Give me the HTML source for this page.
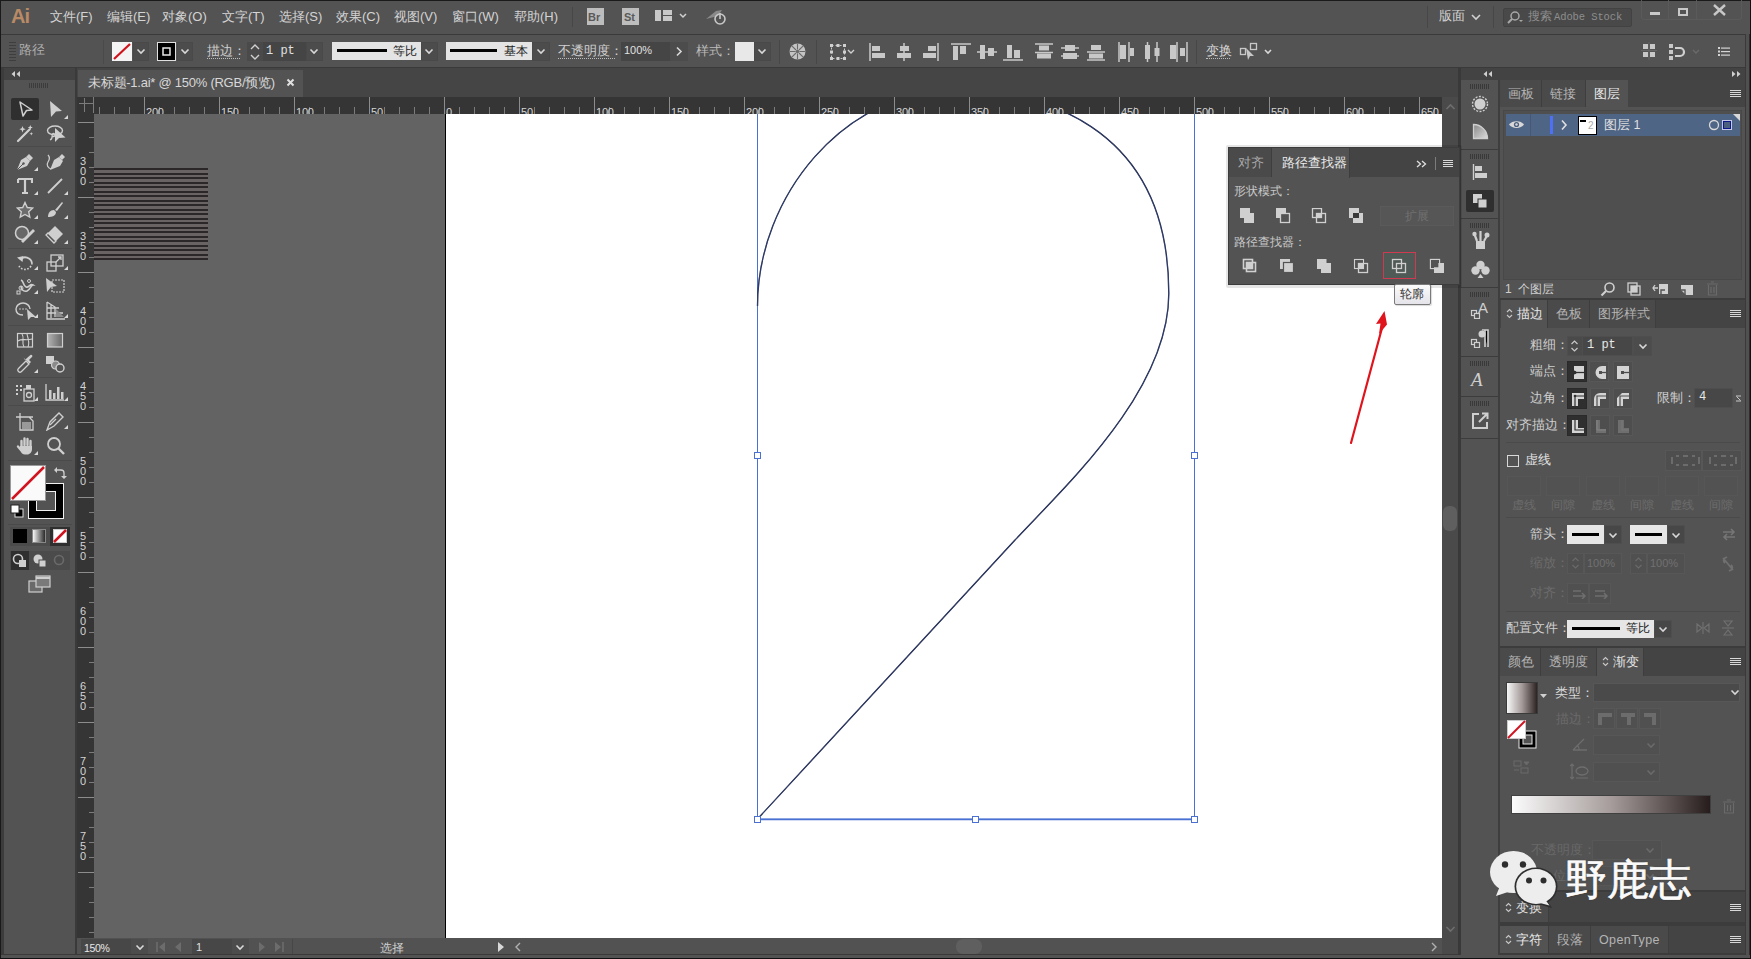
<!DOCTYPE html>
<html><head><meta charset="utf-8">
<style>
*{margin:0;padding:0;box-sizing:border-box}
html,body{width:1751px;height:959px;overflow:hidden;background:#535353;font-family:"Liberation Sans",sans-serif;color:#d8d8d8}
.a{position:absolute}
.t{position:absolute;white-space:nowrap;font-size:12px;line-height:14px}
</style></head><body>
<!-- window frame -->
<div class="a" style="left:0;top:0;width:1751px;height:959px;border:1px solid #1a1a1a"></div>
<!-- menu bar -->
<div class="a" style="left:1px;top:1px;width:1749px;height:33px;background:#535353"></div>
<div class="a" style="left:1px;top:34px;width:1749px;height:1px;background:#3a3a3a"></div>

<!-- MENUBAR CONTENT -->
<div class="t" style="left:11px;top:5px;font-size:20px;line-height:22px;font-weight:bold;color:#b98a66;letter-spacing:-1px">Ai</div>
<div class="t" style="left:50px;top:10px;font-size:13px;color:#d4d4d4">文件(F)</div>
<div class="t" style="left:107px;top:10px;font-size:13px;color:#d4d4d4">编辑(E)</div>
<div class="t" style="left:162px;top:10px;font-size:13px;color:#d4d4d4">对象(O)</div>
<div class="t" style="left:222px;top:10px;font-size:13px;color:#d4d4d4">文字(T)</div>
<div class="t" style="left:279px;top:10px;font-size:13px;color:#d4d4d4">选择(S)</div>
<div class="t" style="left:336px;top:10px;font-size:13px;color:#d4d4d4">效果(C)</div>
<div class="t" style="left:394px;top:10px;font-size:13px;color:#d4d4d4">视图(V)</div>
<div class="t" style="left:452px;top:10px;font-size:13px;color:#d4d4d4">窗口(W)</div>
<div class="t" style="left:514px;top:10px;font-size:13px;color:#d4d4d4">帮助(H)</div>
<div class="a" style="left:572px;top:7px;width:1px;height:20px;background:#474747"></div>
<div class="a" style="left:587px;top:8px;width:17px;height:17px;background:#bdbdbd"></div>
<div class="t" style="left:588px;top:10px;font-size:11px;font-weight:bold;color:#5a5a5a">Br</div>
<div class="a" style="left:622px;top:8px;width:17px;height:17px;background:#bdbdbd"></div>
<div class="t" style="left:624px;top:10px;font-size:11px;font-weight:bold;color:#5a5a5a">St</div>
<svg class="a" style="left:654px;top:9px" width="40" height="14"><rect x="1" y="1" width="6" height="11" fill="#c8c8c8"/><rect x="9" y="1" width="9" height="5" fill="#c8c8c8"/><rect x="9" y="7" width="9" height="5" fill="#c8c8c8"/><path d="M26 5l3 3 3-3" stroke="#d0d0d0" stroke-width="1.5" fill="none"/></svg>
<svg class="a" style="left:704px;top:7px" width="26" height="20"><path d="M2 12 L12 4 L18 3 L14 9 Z" fill="#8a8a8a"/><circle cx="16" cy="12" r="5" fill="none" stroke="#c8c8c8" stroke-width="1.6"/><path d="M16 6v6" stroke="#c8c8c8" stroke-width="1.6"/></svg>
<div class="a" style="left:1427px;top:6px;width:1px;height:22px;background:#474747"></div>
<div class="t" style="left:1439px;top:9px;font-size:13px;color:#d4d4d4">版面</div>
<svg class="a" style="left:1470px;top:13px" width="12" height="8"><path d="M2 2l4 4 4-4" stroke="#d0d0d0" stroke-width="1.6" fill="none"/></svg>
<div class="a" style="left:1493px;top:6px;width:1px;height:22px;background:#474747"></div>
<div class="a" style="left:1503px;top:8px;width:129px;height:19px;background:#494949;border:1px solid #424242;border-radius:2px"></div>
<svg class="a" style="left:1506px;top:10px" width="20" height="16"><circle cx="9" cy="6" r="4" fill="none" stroke="#a8a8a8" stroke-width="1.5"/><path d="M6 9 L2 13" stroke="#a8a8a8" stroke-width="2"/><path d="M13 10l2 2 2-2z" fill="#a8a8a8"/></svg>
<div class="t" style="left:1528px;top:9px;font-size:12px;color:#8e8e8e">搜索</div><div class="t" style="left:1554px;top:10px;font-size:10.5px;color:#8e8e8e;font-family:'Liberation Mono',monospace;letter-spacing:-0.1px">Adobe Stock</div>
<div class="a" style="left:1641px;top:0px;width:101px;height:20px;border:1px solid #5a5a5a;border-top:none;border-radius:0 0 3px 3px"></div>
<div class="a" style="left:1668px;top:0px;width:1px;height:19px;background:#5a5a5a"></div>
<div class="a" style="left:1696px;top:0px;width:1px;height:19px;background:#5a5a5a"></div>
<div class="a" style="left:1650px;top:12px;width:10px;height:3px;background:#c8c8c8"></div>
<div class="a" style="left:1678px;top:8px;width:10px;height:8px;border:2px solid #c8c8c8"></div>
<svg class="a" style="left:1712px;top:4px" width="16" height="12"><path d="M2 1L13 11M13 1L2 11" stroke="#c8c8c8" stroke-width="2.4"/></svg>

<!-- control bar -->
<div class="a" style="left:1px;top:35px;width:1749px;height:33px;background:#535353"></div>
<div class="a" style="left:1px;top:67px;width:1749px;height:1px;background:#3a3a3a"></div>


<!-- CONTROL CONTENT -->
<div class="a" style="left:9px;top:42px;width:7px;height:19px;background:repeating-linear-gradient(#3e3e3e 0 1px,transparent 1px 3px)"></div>
<div class="t" style="left:19px;top:43px;font-size:13px;color:#b0b0b0">路径</div>
<div class="a" style="left:103px;top:40px;width:1px;height:24px;background:#4a4a4a"></div>
<svg class="a" style="left:112px;top:42px" width="20" height="19"><rect width="20" height="19" fill="#f4f4f4"/><path d="M2 17L18 2" stroke="#d0121b" stroke-width="2.2"/></svg>
<div class="a" style="left:133px;top:42px;width:16px;height:19px;background:#4c4c4c;border:1px solid #494949"></div><svg class="a" style="left:136px;top:48px" width="10" height="7"><path d="M1.5 1.5l3.5 3.5 3.5-3.5" stroke="#d8d8d8" stroke-width="1.6" fill="none"/></svg>
<svg class="a" style="left:157px;top:42px" width="19" height="19"><rect x="0.5" y="0.5" width="18" height="18" fill="#000" stroke="#e0e0e0"/><rect x="6" y="6" width="7" height="7" fill="none" stroke="#e8e8e8" stroke-width="1.5"/></svg>
<div class="a" style="left:177px;top:42px;width:16px;height:19px;background:#4c4c4c;border:1px solid #494949"></div><svg class="a" style="left:180px;top:48px" width="10" height="7"><path d="M1.5 1.5l3.5 3.5 3.5-3.5" stroke="#d8d8d8" stroke-width="1.6" fill="none"/></svg>
<div class="t" style="left:207px;top:44px;font-size:13px;color:#d0d0d0">描边：</div>
<div class="a" style="left:207px;top:58px;width:33px;height:1px;border-top:1px dotted #bdbdbd"></div>
<div class="a" style="left:247px;top:42px;width:16px;height:19px;background:#4a4a4a"></div>
<svg class="a" style="left:249px;top:43px" width="12" height="18"><path d="M2 6l4-4 4 4M2 12l4 4 4-4" stroke="#d0d0d0" stroke-width="1.4" fill="none"/></svg>
<div class="a" style="left:263px;top:42px;width:43px;height:19px;background:#454545"></div>
<div class="t" style="left:266px;top:44px;font-size:12px;color:#e0e0e0;font-family:'Liberation Mono',monospace">1 pt</div>
<div class="a" style="left:306px;top:42px;width:17px;height:19px;background:#4c4c4c;border:1px solid #494949"></div><svg class="a" style="left:309px;top:48px" width="10" height="7"><path d="M1.5 1.5l3.5 3.5 3.5-3.5" stroke="#d8d8d8" stroke-width="1.6" fill="none"/></svg>
<div class="a" style="left:332px;top:42px;width:89px;height:18px;background:#e4e4e4"></div>
<div class="a" style="left:337px;top:49px;width:50px;height:3px;background:#050505"></div>
<div class="t" style="left:393px;top:44px;font-size:12px;color:#222">等比</div>
<div class="a" style="left:421px;top:42px;width:17px;height:19px;background:#4c4c4c;border:1px solid #494949"></div><svg class="a" style="left:424px;top:48px" width="10" height="7"><path d="M1.5 1.5l3.5 3.5 3.5-3.5" stroke="#d8d8d8" stroke-width="1.6" fill="none"/></svg>
<div class="a" style="left:446px;top:42px;width:86px;height:18px;background:#e4e4e4"></div>
<div class="a" style="left:450px;top:49px;width:47px;height:3px;background:#050505"></div>
<div class="t" style="left:504px;top:44px;font-size:12px;color:#222">基本</div>
<div class="a" style="left:532px;top:42px;width:18px;height:19px;background:#4c4c4c;border:1px solid #494949"></div><svg class="a" style="left:536px;top:48px" width="10" height="7"><path d="M1.5 1.5l3.5 3.5 3.5-3.5" stroke="#d8d8d8" stroke-width="1.6" fill="none"/></svg>
<div class="t" style="left:558px;top:44px;font-size:13px;color:#d0d0d0">不透明度：</div>
<div class="a" style="left:558px;top:58px;width:57px;height:1px;border-top:1px dotted #bdbdbd"></div>
<div class="a" style="left:621px;top:42px;width:49px;height:19px;background:#454545"></div>
<div class="t" style="left:624px;top:43px;font-size:11px;color:#e0e0e0">100%</div>
<div class="a" style="left:670px;top:42px;width:18px;height:19px;background:#4c4c4c"></div>
<svg class="a" style="left:675px;top:46px" width="8" height="11"><path d="M2 1.5l4 4-4 4" stroke="#d8d8d8" stroke-width="1.6" fill="none"/></svg>
<div class="t" style="left:696px;top:44px;font-size:13px;color:#bdbdbd">样式：</div>
<div class="a" style="left:735px;top:42px;width:19px;height:19px;background:#e8e8e8"></div>
<div class="a" style="left:754px;top:42px;width:17px;height:19px;background:#4c4c4c;border:1px solid #494949"></div><svg class="a" style="left:757px;top:48px" width="10" height="7"><path d="M1.5 1.5l3.5 3.5 3.5-3.5" stroke="#d8d8d8" stroke-width="1.6" fill="none"/></svg>
<div class="a" style="left:779px;top:40px;width:1px;height:24px;background:#474747"></div>
<svg class="a" style="left:788px;top:42px" width="19" height="19"><circle cx="9.5" cy="9.5" r="8" fill="#c4c4c4"/><g stroke="#6a6a6a" stroke-width="1.1"><path d="M9.5 1.5v6M9.5 11.5v6M1.5 9.5h6M11.5 9.5h6M3.8 3.8l4.2 4.2M11 11l4.2 4.2M15.2 3.8L11 8M8 11l-4.2 4.2"/></g><circle cx="9.5" cy="9.5" r="1.8" fill="#6a6a6a"/></svg>
<div class="a" style="left:816px;top:40px;width:1px;height:24px;background:#474747"></div>
<svg class="a" style="left:829px;top:43px" width="28" height="18"><rect x="2.5" y="2.5" width="13" height="13" fill="none" stroke="#c8c8c8" stroke-dasharray="2 2"/><g fill="#d0d0d0"><rect x="1" y="1" width="3" height="3"/><rect x="7.5" y="1" width="3" height="3"/><rect x="14" y="1" width="3" height="3"/><rect x="1" y="14" width="3" height="3"/><rect x="7.5" y="14" width="3" height="3"/><rect x="14" y="14" width="3" height="3"/><rect x="1" y="7.5" width="3" height="3"/><rect x="14" y="7.5" width="3" height="3"/></g><path d="M19 7l3 3 3-3" stroke="#d0d0d0" stroke-width="1.4" fill="none"/></svg>

<svg class="a" style="left:868px;top:42px" width="20" height="20"><path d="M2 1v18" stroke="#c8c8c8" stroke-width="1.5"/><rect x="4" y="4" width="8" height="5" fill="#c8c8c8"/><rect x="4" y="11" width="13" height="5" fill="#c8c8c8"/></svg>
<svg class="a" style="left:894px;top:42px" width="20" height="20"><path d="M10 1v18" stroke="#c8c8c8" stroke-width="1.5"/><rect x="6" y="4" width="9" height="5" fill="#c8c8c8"/><rect x="3" y="11" width="14" height="5" fill="#c8c8c8"/></svg>
<svg class="a" style="left:920px;top:42px" width="20" height="20"><path d="M18 1v18" stroke="#c8c8c8" stroke-width="1.5"/><rect x="8" y="4" width="8" height="5" fill="#c8c8c8"/><rect x="3" y="11" width="13" height="5" fill="#c8c8c8"/></svg>
<svg class="a" style="left:950px;top:42px" width="22" height="20"><path d="M1 2h20" stroke="#c8c8c8" stroke-width="1.5"/><rect x="3" y="4" width="5" height="14" fill="#c8c8c8"/><rect x="10" y="4" width="6" height="8" fill="#c8c8c8"/></svg>
<svg class="a" style="left:976px;top:42px" width="22" height="20"><path d="M1 10h20" stroke="#c8c8c8" stroke-width="1.5"/><rect x="4" y="3" width="5" height="14" fill="#c8c8c8"/><rect x="12" y="6" width="6" height="8" fill="#c8c8c8"/></svg>
<svg class="a" style="left:1002px;top:42px" width="22" height="20"><path d="M1 18h20" stroke="#c8c8c8" stroke-width="1.5"/><rect x="5" y="3" width="5" height="13" fill="#c8c8c8"/><rect x="12" y="8" width="6" height="8" fill="#c8c8c8"/></svg>
<svg class="a" style="left:1033px;top:42px" width="22" height="20"><path d="M2 2h18M2 10.5h18" stroke="#c8c8c8" stroke-width="1.5"/><rect x="6" y="3.5" width="10" height="5" fill="#c8c8c8"/><rect x="4" y="11.5" width="14" height="5" fill="#c8c8c8"/></svg>
<svg class="a" style="left:1059px;top:42px" width="22" height="20"><path d="M2 6h18M2 14h18" stroke="#c8c8c8" stroke-width="1.5"/><rect x="6" y="3" width="10" height="6" fill="#c8c8c8"/><rect x="4" y="11" width="14" height="6" fill="#c8c8c8"/></svg>
<svg class="a" style="left:1085px;top:42px" width="22" height="20"><path d="M2 10h18M2 18h18" stroke="#c8c8c8" stroke-width="1.5"/><rect x="6" y="3" width="10" height="5" fill="#c8c8c8"/><rect x="4" y="11.5" width="14" height="5" fill="#c8c8c8"/></svg>
<svg class="a" style="left:1117px;top:41px" width="20" height="22"><path d="M2 1v20M12 1v20" stroke="#c8c8c8" stroke-width="1.5"/><rect x="3" y="4" width="6" height="14" fill="#c8c8c8"/><rect x="13" y="7" width="4" height="8" fill="#c8c8c8"/></svg>
<svg class="a" style="left:1143px;top:41px" width="20" height="22"><path d="M4.5 1v20M14 1v20" stroke="#c8c8c8" stroke-width="1.5"/><rect x="2" y="4" width="5" height="14" fill="#c8c8c8"/><rect x="11.5" y="7" width="5" height="8" fill="#c8c8c8"/></svg>
<svg class="a" style="left:1169px;top:41px" width="20" height="22"><path d="M8 1v20M18 1v20" stroke="#c8c8c8" stroke-width="1.5"/><rect x="1" y="4" width="6" height="14" fill="#c8c8c8"/><rect x="11" y="7" width="5" height="8" fill="#c8c8c8"/></svg>
<div class="a" style="left:1196px;top:40px;width:1px;height:24px;background:#474747"></div>
<div class="t" style="left:1206px;top:44px;font-size:13px;color:#d8d8d8">变换</div>
<div class="a" style="left:1206px;top:58px;width:24px;height:1px;border-top:1px dotted #bdbdbd"></div>
<svg class="a" style="left:1239px;top:42px" width="34" height="20"><rect x="1.5" y="6.5" width="5" height="6" fill="none" stroke="#c8c8c8" stroke-width="1.3"/><rect x="11.5" y="1.5" width="6" height="6" fill="none" stroke="#c8c8c8" stroke-width="1.3"/><path d="M7 6l8 8-4 0-2 4z" fill="#c8c8c8"/><path d="M26 8l3 3 3-3" stroke="#d8d8d8" stroke-width="1.6" fill="none"/></svg>
<svg class="a" style="left:1641px;top:42px" width="16" height="18"><g fill="#c8c8c8"><rect x="2" y="2" width="5" height="5"/><rect x="9" y="2" width="5" height="5"/><rect x="2" y="10" width="5" height="5"/><rect x="9" y="10" width="5" height="5"/></g><path d="M8 0v18M0 8.5h16" stroke="#6a6a6a" stroke-width="0.8"/></svg>
<svg class="a" style="left:1667px;top:42px" width="38" height="20"><g fill="#c8c8c8"><rect x="2" y="2" width="4" height="4"/><rect x="2" y="8" width="4" height="4"/><rect x="2" y="14" width="4" height="4"/></g><path d="M8 6h5a4 4 0 0 1 0 8h-5" stroke="#d0d0d0" stroke-width="2.2" fill="none"/><path d="M26 8l3 3 3-3" stroke="#6a6a6a" stroke-width="1.4" fill="none"/></svg>
<svg class="a" style="left:1717px;top:46px" width="14" height="11"><g fill="#d4d4d4"><rect x="1" y="1" width="2" height="2"/><rect x="1" y="4.5" width="2" height="2"/><rect x="1" y="8" width="2" height="2"/><rect x="4" y="1.5" width="9" height="1.2"/><rect x="4" y="5" width="9" height="1.2"/><rect x="4" y="8.5" width="9" height="1.2"/></g></svg>

<!-- left toolbar -->
<div class="a" style="left:4px;top:68px;width:72px;height:12px;background:#434343"></div>
<div class="a" style="left:75px;top:68px;width:2px;height:886px;background:#3a3a3a"></div>


<!-- TOOLBAR -->
<div class="a" style="left:1px;top:68px;width:3px;height:887px;background:#3c3c3c"></div>
<svg class="a" style="left:10px;top:70px" width="12" height="8"><path d="M5 1L1.5 4 5 7zM10 1L6.5 4 10 7z" fill="#d0d0d0"/></svg>
<div class="a" style="left:29px;top:83px;width:20px;height:5px;background:repeating-linear-gradient(90deg,#3c3c3c 0 1px,transparent 1px 2px)"></div>
<div class="a" style="left:11px;top:98px;width:28px;height:22px;background:#2f2f2f;border-radius:2px"></div>
<svg class="a" style="left:18px;top:100px" width="16" height="18"><path d="M2 2L14 10 8.5 10.5 5 16z" fill="none" stroke="#cfcfcf" stroke-width="1.5" stroke-linejoin="round"/></svg>
<svg class="a" style="left:48px;top:100px" width="16" height="18"><path d="M2 1L14 11 8 11.5 3 17z" fill="#cfcfcf"/></svg><svg class="a" style="left:64px;top:115px" width="4" height="4"><path d="M4 0V4H0z" fill="#d8d8d8"/></svg>
<svg class="a" style="left:10px;top:120px" width="60" height="26">
<path d="M8 21L19.5 9.5" stroke="#d0d0d0" stroke-width="2.2" stroke-linecap="round"/>
<path d="M12.5 6l.9 2.3 2.3.9-2.3.9-.9 2.3-.9-2.3-2.3-.9 2.3-.9z" fill="#d0d0d0"/>
<path d="M20.3 5l.7 1.8 1.8.7-1.8.7-.7 1.8-.7-1.8-1.8-.7 1.8-.7z" fill="#d0d0d0"/>
<path d="M21.3 12l.5 1.3 1.3.5-1.3.5-.5 1.3-.5-1.3-1.3-.5 1.3-.5z" fill="#d0d0d0"/>
<ellipse cx="45" cy="10.5" rx="7.5" ry="4.5" fill="none" stroke="#d0d0d0" stroke-width="1.4"/>
<path d="M45 8L55.5 17.5 49 18 45 22z" fill="#d0d0d0"/>
<path d="M42 14.5a1.6 1.6 0 1 1 .2 1.5c0 2-1 3.5-2.2 4" stroke="#d0d0d0" stroke-width="1.3" fill="none"/>
</svg>
<div class="a" style="left:8px;top:146px;width:64px;height:1px;background:#4a4a4a"></div>
<svg class="a" style="left:15px;top:153px" width="20" height="19"><path d="M2 17L6 7 11 4 15 8 12 13z" fill="#cfcfcf"/><path d="M11 4l3-3 4 4-3 3z" fill="#cfcfcf"/><path d="M2 17L8 11" stroke="#535353" stroke-width="1"/><circle cx="8.5" cy="10.5" r="1.2" fill="#535353"/></svg><svg class="a" style="left:34px;top:167px" width="4" height="4"><path d="M4 0V4H0z" fill="#d8d8d8"/></svg>
<svg class="a" style="left:45px;top:153px" width="21" height="19"><path d="M5 17L9 7 14 4 18 8 15 13z" fill="#cfcfcf"/><path d="M14 4l3-3 3 3-3 3z" fill="#cfcfcf"/><path d="M3 2c2 2 2 4 0 7s0 6 3 7" stroke="#cfcfcf" stroke-width="1.3" fill="none"/></svg>
<svg class="a" style="left:17px;top:178px" width="16" height="16"><path d="M1 1h14v4M1 1v4M8 1v14M5 15h6" stroke="#cfcfcf" stroke-width="2.2" fill="none"/></svg><svg class="a" style="left:34px;top:191px" width="4" height="4"><path d="M4 0V4H0z" fill="#d8d8d8"/></svg>
<svg class="a" style="left:46px;top:177px" width="18" height="18"><path d="M2 16L16 2" stroke="#cfcfcf" stroke-width="1.8"/></svg><svg class="a" style="left:64px;top:191px" width="4" height="4"><path d="M4 0V4H0z" fill="#d8d8d8"/></svg>
<svg class="a" style="left:16px;top:201px" width="18" height="18"><path d="M9 1.5l2.3 5 5.4.6-4 3.7 1.1 5.4L9 13.5l-4.8 2.7 1.1-5.4-4-3.7 5.4-.6z" fill="#6c6c6c" stroke="#cfcfcf" stroke-width="1.4"/></svg><svg class="a" style="left:34px;top:215px" width="4" height="4"><path d="M4 0V4H0z" fill="#d8d8d8"/></svg>
<svg class="a" style="left:45px;top:200px" width="19" height="19"><path d="M10 10L17 2 18 3 12 11z" fill="#cfcfcf"/><path d="M3 17c0-4 2-7 6-7l2 2c0 4-4 5-8 5z" fill="#cfcfcf"/></svg><svg class="a" style="left:64px;top:215px" width="4" height="4"><path d="M4 0V4H0z" fill="#d8d8d8"/></svg>
<svg class="a" style="left:14px;top:224px" width="23" height="20"><circle cx="8" cy="9" r="6.5" fill="#676767" stroke="#cfcfcf" stroke-width="1.5"/><path d="M7 17L19 5 21 7 9 19z" fill="#cfcfcf"/></svg><svg class="a" style="left:34px;top:240px" width="4" height="4"><path d="M4 0V4H0z" fill="#d8d8d8"/></svg>
<svg class="a" style="left:45px;top:224px" width="20" height="20"><path d="M10 2L18 10 11 17 3 9z" fill="#cfcfcf"/><path d="M3 9l8 8-2 2-8-8z" fill="none" stroke="#cfcfcf" stroke-width="1.3"/></svg><svg class="a" style="left:64px;top:240px" width="4" height="4"><path d="M4 0V4H0z" fill="#d8d8d8"/></svg>
<div class="a" style="left:8px;top:248px;width:64px;height:1px;background:#4a4a4a"></div>
<svg class="a" style="left:16px;top:254px" width="18" height="18"><path d="M4 5.5A7 7 0 0 1 16 9" stroke="#cfcfcf" stroke-width="1.8" fill="none"/><path d="M16 9A7 7 0 0 1 3 12" stroke="#cfcfcf" stroke-width="1.6" fill="none" stroke-dasharray="1.6 1.6"/><path d="M1 3.5l6.5-1.5-1 6z" fill="#cfcfcf"/></svg><svg class="a" style="left:34px;top:266px" width="4" height="4"><path d="M4 0V4H0z" fill="#d8d8d8"/></svg>
<svg class="a" style="left:46px;top:254px" width="19" height="18"><rect x="1" y="8" width="9" height="9" fill="none" stroke="#cfcfcf" stroke-width="1.3"/><rect x="5" y="1" width="12" height="11" fill="none" stroke="#cfcfcf" stroke-width="1.3"/><path d="M10 8l5-5M12 3h3v3" stroke="#cfcfcf" stroke-width="1.3" fill="none"/></svg><svg class="a" style="left:64px;top:266px" width="4" height="4"><path d="M4 0V4H0z" fill="#d8d8d8"/></svg>
<svg class="a" style="left:15px;top:277px" width="21" height="18"><path d="M6 3c3 1 2 6 5 7s4-4 7-2c-2 0-2 4-6 6-4 1-6-2-6-5" fill="none" stroke="#cfcfcf" stroke-width="1.6"/><circle cx="6" cy="11" r="2" fill="none" stroke="#cfcfcf"/><rect x="2" y="14" width="3" height="3" fill="none" stroke="#cfcfcf"/><circle cx="14" cy="4" r="1.5" fill="none" stroke="#cfcfcf"/></svg><svg class="a" style="left:34px;top:290px" width="4" height="4"><path d="M4 0V4H0z" fill="#d8d8d8"/></svg>
<svg class="a" style="left:45px;top:277px" width="21" height="18"><path d="M1 1L12 9 6 10 2 15z" fill="#cfcfcf"/><rect x="7" y="3" width="12" height="12" fill="none" stroke="#cfcfcf" stroke-width="1.2" stroke-dasharray="2 1"/></svg>
<svg class="a" style="left:15px;top:301px" width="22" height="19"><path d="M8 14c-5 0-7-3-7-6s3-6 7-6 7 3 7 6" fill="none" stroke="#cfcfcf" stroke-width="1.4"/><circle cx="5" cy="8" r="0.8" fill="#cfcfcf"/><circle cx="8" cy="8" r="0.8" fill="#cfcfcf"/><circle cx="11" cy="8" r="0.8" fill="#cfcfcf"/><path d="M12 8L21 16 16 16 13 19z" fill="#cfcfcf"/></svg><svg class="a" style="left:34px;top:314px" width="4" height="4"><path d="M4 0V4H0z" fill="#d8d8d8"/></svg>
<svg class="a" style="left:46px;top:301px" width="20" height="19"><path d="M1 1v17h18M1 1l8 5v10M1 7h12M1 12h16M5 3v14" stroke="#cfcfcf" stroke-width="1.3" fill="none"/><path d="M10 8l8 8h-8z" fill="#8a8a8a"/></svg><svg class="a" style="left:64px;top:314px" width="4" height="4"><path d="M4 0V4H0z" fill="#d8d8d8"/></svg>
<div class="a" style="left:8px;top:325px;width:64px;height:1px;background:#4a4a4a"></div>
<svg class="a" style="left:16px;top:332px" width="18" height="17"><rect x="1.5" y="1.5" width="15" height="13.5" fill="none" stroke="#d0d0d0" stroke-width="1.2"/><path d="M2 9c4-3 8 0 14-2M6 2c3 4-1 8 2 13M11 2c1 5 3 8 1 13" stroke="#d0d0d0" stroke-width="1.1" fill="none"/></svg>
<svg class="a" style="left:46px;top:332px" width="18" height="17"><defs><linearGradient id="tg1"><stop offset="0" stop-color="#b4b4b4"/><stop offset="1" stop-color="#666"/></linearGradient></defs><rect x="1.5" y="1.5" width="15" height="13.5" fill="url(#tg1)" stroke="#d0d0d0" stroke-width="1.2"/></svg>
<svg class="a" style="left:15px;top:354px" width="20" height="19"><path d="M3.5 17.5c-1-1-1-2 0-3L11 7l3 3-7.5 7.5c-1 1-2 1-3 0z" fill="none" stroke="#d0d0d0" stroke-width="1.3"/><path d="M10 6l2-2 3.5-3c1-.8 2.5.7 1.7 1.7L14 6l2 2-1.5 1.5-6-6z" fill="#d0d0d0"/></svg><svg class="a" style="left:34px;top:369px" width="4" height="4"><path d="M4 0V4H0z" fill="#d8d8d8"/></svg>
<svg class="a" style="left:45px;top:355px" width="21" height="18"><rect x="1" y="1" width="8" height="8" fill="#d0d0d0"/><circle cx="10.5" cy="10" r="4" fill="#8a8a8a" stroke="#d0d0d0" stroke-width="1.2"/><circle cx="15" cy="13" r="4" fill="#535353" stroke="#d0d0d0" stroke-width="1.4"/></svg>
<div class="a" style="left:8px;top:377px;width:64px;height:1px;background:#4a4a4a"></div>
<svg class="a" style="left:15px;top:383px" width="22" height="19"><g fill="#cfcfcf"><rect x="1" y="2" width="2" height="2"/><rect x="5" y="2" width="2" height="2"/><rect x="1" y="6" width="2" height="2"/><rect x="5" y="6" width="2" height="2"/><rect x="1" y="10" width="2" height="2"/></g><rect x="9" y="6" width="10" height="12" fill="none" stroke="#cfcfcf" stroke-width="1.3"/><rect x="11" y="2" width="5" height="4" fill="#cfcfcf"/><circle cx="14" cy="12" r="2.5" fill="none" stroke="#cfcfcf" stroke-width="1.3"/></svg><svg class="a" style="left:34px;top:397px" width="4" height="4"><path d="M4 0V4H0z" fill="#d8d8d8"/></svg>
<svg class="a" style="left:45px;top:383px" width="20" height="18"><path d="M1 1v16h18" stroke="#cfcfcf" stroke-width="1.3" fill="none"/><g fill="#cfcfcf"><rect x="4" y="7" width="2.5" height="9"/><rect x="8" y="10" width="2.5" height="6"/><rect x="12" y="4" width="2.5" height="12"/><rect x="16" y="9" width="2.5" height="7"/></g></svg><svg class="a" style="left:64px;top:397px" width="4" height="4"><path d="M4 0V4H0z" fill="#d8d8d8"/></svg>
<div class="a" style="left:8px;top:405px;width:64px;height:1px;background:#4a4a4a"></div>
<svg class="a" style="left:15px;top:412px" width="20" height="19"><path d="M5 1v4M1 5h17M5 5v13h13V9l-4-4" stroke="#cfcfcf" stroke-width="1.3" fill="none"/><path d="M7 10h9v7H7z" fill="#999"/></svg>
<svg class="a" style="left:45px;top:412px" width="20" height="19"><path d="M2 18l3-8 9-9 4 4-9 9z" fill="none" stroke="#cfcfcf" stroke-width="1.4"/><path d="M5 13l6-6" stroke="#cfcfcf" stroke-width="1.2"/></svg><svg class="a" style="left:64px;top:425px" width="4" height="4"><path d="M4 0V4H0z" fill="#d8d8d8"/></svg>
<svg class="a" style="left:15px;top:436px" width="20" height="20"><g stroke="#cfcfcf" stroke-linecap="round" stroke-width="2.4"><path d="M6.5 10V5M9.5 9V2.5M12.5 9V3M15.5 10V5"/><path d="M3 10.5l2.5 3"/></g><path d="M5 10h12v3c0 3-2 5.5-5 5.5H10c-2.5 0-3.5-1.5-5-4z" fill="#cfcfcf"/></svg><svg class="a" style="left:34px;top:451px" width="4" height="4"><path d="M4 0V4H0z" fill="#d8d8d8"/></svg>
<svg class="a" style="left:46px;top:436px" width="19" height="19"><circle cx="8" cy="8" r="6" fill="none" stroke="#cfcfcf" stroke-width="1.8"/><path d="M12.5 12.5L18 18" stroke="#cfcfcf" stroke-width="2.4"/></svg>
<div class="a" style="left:8px;top:460px;width:64px;height:1px;background:#4a4a4a"></div>
<!-- fill/stroke -->
<svg class="a" style="left:28px;top:483px" width="36" height="36"><rect x="0.5" y="0.5" width="35" height="35" fill="#000" stroke="#f0f0f0" stroke-width="1"/><rect x="8.5" y="8.5" width="19" height="19" fill="#535353" stroke="#f0f0f0" stroke-width="1"/></svg>
<svg class="a" style="left:10px;top:465px" width="36" height="36"><rect x="0.5" y="0.5" width="35" height="35" fill="#fafafa" stroke="#9a9a9a"/><path d="M2 34L34 2" stroke="#d01420" stroke-width="2.5"/></svg>
<svg class="a" style="left:53px;top:466px" width="14" height="14"><path d="M2 4h6a3 3 0 0 1 3 3v5" stroke="#d0d0d0" stroke-width="1.3" fill="none"/><path d="M1 4l3-3v6zM11 13l-3-3h6z" fill="#d0d0d0"/></svg>
<svg class="a" style="left:10px;top:504px" width="14" height="14"><rect x="5" y="5" width="8" height="8" fill="#000" stroke="#ddd"/><rect x="1" y="1" width="8" height="8" fill="#fff" stroke="#222"/></svg>
<div class="a" style="left:8px;top:524px;width:64px;height:1px;background:#4a4a4a"></div>
<div class="a" style="left:10px;top:527px;width:60px;height:19px;background:#4b4b4b"></div>
<div class="a" style="left:13px;top:529px;width:14px;height:14px;background:#000"></div>
<svg class="a" style="left:32px;top:529px" width="14" height="14"><defs><linearGradient id="tg2"><stop offset="0" stop-color="#fff"/><stop offset="1" stop-color="#222"/></linearGradient></defs><rect x="0.5" y="0.5" width="13" height="13" fill="url(#tg2)" stroke="#888"/></svg>
<div class="a" style="left:50px;top:527px;width:20px;height:19px;background:#2f2f2f"></div>
<svg class="a" style="left:53px;top:529px" width="14" height="14"><rect x="0.5" y="0.5" width="13" height="13" fill="#fff" stroke="#ccc"/><path d="M1 13L13 1" stroke="#d01420" stroke-width="2.5"/></svg>
<div class="a" style="left:10px;top:551px;width:60px;height:19px;background:#4b4b4b"></div>
<div class="a" style="left:11px;top:551px;width:18px;height:19px;background:#2f2f2f"></div>
<svg class="a" style="left:12px;top:553px" width="16" height="15"><circle cx="6" cy="6" r="4.5" fill="none" stroke="#cfcfcf" stroke-width="1.6"/><rect x="7" y="7" width="7" height="7" fill="#cfcfcf"/></svg>
<svg class="a" style="left:32px;top:553px" width="16" height="15"><circle cx="6" cy="6" r="4.5" fill="#cfcfcf"/><rect x="7" y="7" width="7" height="7" fill="#cfcfcf" stroke="#4b4b4b"/></svg>
<svg class="a" style="left:52px;top:553px" width="16" height="15"><circle cx="7" cy="7" r="4.5" fill="none" stroke="#6a6a6a" stroke-width="1.6"/></svg>
<svg class="a" style="left:28px;top:575px" width="24" height="19"><rect x="1" y="6" width="13" height="11" fill="#6a6a6a" stroke="#cfcfcf" stroke-width="1.2"/><rect x="8" y="1" width="14" height="11" fill="#7a7a7a" stroke="#cfcfcf" stroke-width="1.2"/><path d="M8 3h14" stroke="#cfcfcf" stroke-width="2"/></svg>

<!-- doc tab area -->
<div class="a" style="left:77px;top:68px;width:1381px;height:29px;background:#454545"></div>
<div class="a" style="left:78px;top:70px;width:225px;height:27px;background:#535353"></div>
<div class="t" style="left:88px;top:76px;font-size:13px;color:#d8d8d8;letter-spacing:-0.25px">未标题-1.ai* @ 150% (RGB/预览)</div>
<svg class="a" style="left:286px;top:78px" width="9" height="9"><path d="M1.5 1.5l6 6M7.5 1.5l-6 6" stroke="#e0e0e0" stroke-width="2"/></svg>
<!-- rulers -->
<div class="a" style="left:77px;top:97px;width:1365px;height:17px;background:#353535;overflow:hidden">
</div>
<div class="a" style="left:94px;top:97px;width:1348px;height:17px;overflow:hidden">
<div class="a" style="left:-94px;top:-97px;width:1442px;height:113px"><div class="a" style="left:159px;top:107px;width:1px;height:7px;background:#7c7c7c"></div><div class="a" style="left:234px;top:107px;width:1px;height:7px;background:#7c7c7c"></div><div class="a" style="left:309px;top:107px;width:1px;height:7px;background:#7c7c7c"></div><div class="a" style="left:384px;top:107px;width:1px;height:7px;background:#7c7c7c"></div><div class="a" style="left:459px;top:107px;width:1px;height:7px;background:#7c7c7c"></div><div class="a" style="left:534px;top:107px;width:1px;height:7px;background:#7c7c7c"></div><div class="a" style="left:609px;top:107px;width:1px;height:7px;background:#7c7c7c"></div><div class="a" style="left:684px;top:107px;width:1px;height:7px;background:#7c7c7c"></div><div class="a" style="left:759px;top:107px;width:1px;height:7px;background:#7c7c7c"></div><div class="a" style="left:834px;top:107px;width:1px;height:7px;background:#7c7c7c"></div><div class="a" style="left:909px;top:107px;width:1px;height:7px;background:#7c7c7c"></div><div class="a" style="left:984px;top:107px;width:1px;height:7px;background:#7c7c7c"></div><div class="a" style="left:1059px;top:107px;width:1px;height:7px;background:#7c7c7c"></div><div class="a" style="left:1134px;top:107px;width:1px;height:7px;background:#7c7c7c"></div><div class="a" style="left:1209px;top:107px;width:1px;height:7px;background:#7c7c7c"></div><div class="a" style="left:1284px;top:107px;width:1px;height:7px;background:#7c7c7c"></div><div class="a" style="left:1359px;top:107px;width:1px;height:7px;background:#7c7c7c"></div><div class="a" style="left:1434px;top:107px;width:1px;height:7px;background:#7c7c7c"></div>
<div class="a" style="left:99px;top:107px;width:1px;height:7px;background:#7c7c7c"></div><div class="a" style="left:114px;top:107px;width:1px;height:7px;background:#7c7c7c"></div><div class="a" style="left:129px;top:107px;width:1px;height:7px;background:#7c7c7c"></div><div class="a" style="left:144px;top:97px;width:1px;height:17px;background:#8c8c8c"></div><div class="t" style="left:146px;top:107px;font-size:11px;line-height:10px;color:#d4d4d4;letter-spacing:-0.2px">200</div><div class="a" style="left:174px;top:107px;width:1px;height:7px;background:#7c7c7c"></div><div class="a" style="left:189px;top:107px;width:1px;height:7px;background:#7c7c7c"></div><div class="a" style="left:204px;top:107px;width:1px;height:7px;background:#7c7c7c"></div><div class="a" style="left:219px;top:97px;width:1px;height:17px;background:#8c8c8c"></div><div class="t" style="left:221px;top:107px;font-size:11px;line-height:10px;color:#d4d4d4;letter-spacing:-0.2px">150</div><div class="a" style="left:249px;top:107px;width:1px;height:7px;background:#7c7c7c"></div><div class="a" style="left:264px;top:107px;width:1px;height:7px;background:#7c7c7c"></div><div class="a" style="left:279px;top:107px;width:1px;height:7px;background:#7c7c7c"></div><div class="a" style="left:294px;top:97px;width:1px;height:17px;background:#8c8c8c"></div><div class="t" style="left:296px;top:107px;font-size:11px;line-height:10px;color:#d4d4d4;letter-spacing:-0.2px">100</div><div class="a" style="left:324px;top:107px;width:1px;height:7px;background:#7c7c7c"></div><div class="a" style="left:339px;top:107px;width:1px;height:7px;background:#7c7c7c"></div><div class="a" style="left:354px;top:107px;width:1px;height:7px;background:#7c7c7c"></div><div class="a" style="left:369px;top:97px;width:1px;height:17px;background:#8c8c8c"></div><div class="t" style="left:371px;top:107px;font-size:11px;line-height:10px;color:#d4d4d4;letter-spacing:-0.2px">50</div><div class="a" style="left:399px;top:107px;width:1px;height:7px;background:#7c7c7c"></div><div class="a" style="left:414px;top:107px;width:1px;height:7px;background:#7c7c7c"></div><div class="a" style="left:429px;top:107px;width:1px;height:7px;background:#7c7c7c"></div><div class="a" style="left:444px;top:97px;width:1px;height:17px;background:#8c8c8c"></div><div class="t" style="left:446px;top:107px;font-size:11px;line-height:10px;color:#d4d4d4;letter-spacing:-0.2px">0</div><div class="a" style="left:474px;top:107px;width:1px;height:7px;background:#7c7c7c"></div><div class="a" style="left:489px;top:107px;width:1px;height:7px;background:#7c7c7c"></div><div class="a" style="left:504px;top:107px;width:1px;height:7px;background:#7c7c7c"></div><div class="a" style="left:519px;top:97px;width:1px;height:17px;background:#8c8c8c"></div><div class="t" style="left:521px;top:107px;font-size:11px;line-height:10px;color:#d4d4d4;letter-spacing:-0.2px">50</div><div class="a" style="left:549px;top:107px;width:1px;height:7px;background:#7c7c7c"></div><div class="a" style="left:564px;top:107px;width:1px;height:7px;background:#7c7c7c"></div><div class="a" style="left:579px;top:107px;width:1px;height:7px;background:#7c7c7c"></div><div class="a" style="left:594px;top:97px;width:1px;height:17px;background:#8c8c8c"></div><div class="t" style="left:596px;top:107px;font-size:11px;line-height:10px;color:#d4d4d4;letter-spacing:-0.2px">100</div><div class="a" style="left:624px;top:107px;width:1px;height:7px;background:#7c7c7c"></div><div class="a" style="left:639px;top:107px;width:1px;height:7px;background:#7c7c7c"></div><div class="a" style="left:654px;top:107px;width:1px;height:7px;background:#7c7c7c"></div><div class="a" style="left:669px;top:97px;width:1px;height:17px;background:#8c8c8c"></div><div class="t" style="left:671px;top:107px;font-size:11px;line-height:10px;color:#d4d4d4;letter-spacing:-0.2px">150</div><div class="a" style="left:699px;top:107px;width:1px;height:7px;background:#7c7c7c"></div><div class="a" style="left:714px;top:107px;width:1px;height:7px;background:#7c7c7c"></div><div class="a" style="left:729px;top:107px;width:1px;height:7px;background:#7c7c7c"></div><div class="a" style="left:744px;top:97px;width:1px;height:17px;background:#8c8c8c"></div><div class="t" style="left:746px;top:107px;font-size:11px;line-height:10px;color:#d4d4d4;letter-spacing:-0.2px">200</div><div class="a" style="left:774px;top:107px;width:1px;height:7px;background:#7c7c7c"></div><div class="a" style="left:789px;top:107px;width:1px;height:7px;background:#7c7c7c"></div><div class="a" style="left:804px;top:107px;width:1px;height:7px;background:#7c7c7c"></div><div class="a" style="left:819px;top:97px;width:1px;height:17px;background:#8c8c8c"></div><div class="t" style="left:821px;top:107px;font-size:11px;line-height:10px;color:#d4d4d4;letter-spacing:-0.2px">250</div><div class="a" style="left:849px;top:107px;width:1px;height:7px;background:#7c7c7c"></div><div class="a" style="left:864px;top:107px;width:1px;height:7px;background:#7c7c7c"></div><div class="a" style="left:879px;top:107px;width:1px;height:7px;background:#7c7c7c"></div><div class="a" style="left:894px;top:97px;width:1px;height:17px;background:#8c8c8c"></div><div class="t" style="left:896px;top:107px;font-size:11px;line-height:10px;color:#d4d4d4;letter-spacing:-0.2px">300</div><div class="a" style="left:924px;top:107px;width:1px;height:7px;background:#7c7c7c"></div><div class="a" style="left:939px;top:107px;width:1px;height:7px;background:#7c7c7c"></div><div class="a" style="left:954px;top:107px;width:1px;height:7px;background:#7c7c7c"></div><div class="a" style="left:969px;top:97px;width:1px;height:17px;background:#8c8c8c"></div><div class="t" style="left:971px;top:107px;font-size:11px;line-height:10px;color:#d4d4d4;letter-spacing:-0.2px">350</div><div class="a" style="left:999px;top:107px;width:1px;height:7px;background:#7c7c7c"></div><div class="a" style="left:1014px;top:107px;width:1px;height:7px;background:#7c7c7c"></div><div class="a" style="left:1029px;top:107px;width:1px;height:7px;background:#7c7c7c"></div><div class="a" style="left:1044px;top:97px;width:1px;height:17px;background:#8c8c8c"></div><div class="t" style="left:1046px;top:107px;font-size:11px;line-height:10px;color:#d4d4d4;letter-spacing:-0.2px">400</div><div class="a" style="left:1074px;top:107px;width:1px;height:7px;background:#7c7c7c"></div><div class="a" style="left:1089px;top:107px;width:1px;height:7px;background:#7c7c7c"></div><div class="a" style="left:1104px;top:107px;width:1px;height:7px;background:#7c7c7c"></div><div class="a" style="left:1119px;top:97px;width:1px;height:17px;background:#8c8c8c"></div><div class="t" style="left:1121px;top:107px;font-size:11px;line-height:10px;color:#d4d4d4;letter-spacing:-0.2px">450</div><div class="a" style="left:1149px;top:107px;width:1px;height:7px;background:#7c7c7c"></div><div class="a" style="left:1164px;top:107px;width:1px;height:7px;background:#7c7c7c"></div><div class="a" style="left:1179px;top:107px;width:1px;height:7px;background:#7c7c7c"></div><div class="a" style="left:1194px;top:97px;width:1px;height:17px;background:#8c8c8c"></div><div class="t" style="left:1196px;top:107px;font-size:11px;line-height:10px;color:#d4d4d4;letter-spacing:-0.2px">500</div><div class="a" style="left:1224px;top:107px;width:1px;height:7px;background:#7c7c7c"></div><div class="a" style="left:1239px;top:107px;width:1px;height:7px;background:#7c7c7c"></div><div class="a" style="left:1254px;top:107px;width:1px;height:7px;background:#7c7c7c"></div><div class="a" style="left:1269px;top:97px;width:1px;height:17px;background:#8c8c8c"></div><div class="t" style="left:1271px;top:107px;font-size:11px;line-height:10px;color:#d4d4d4;letter-spacing:-0.2px">550</div><div class="a" style="left:1299px;top:107px;width:1px;height:7px;background:#7c7c7c"></div><div class="a" style="left:1314px;top:107px;width:1px;height:7px;background:#7c7c7c"></div><div class="a" style="left:1329px;top:107px;width:1px;height:7px;background:#7c7c7c"></div><div class="a" style="left:1344px;top:97px;width:1px;height:17px;background:#8c8c8c"></div><div class="t" style="left:1346px;top:107px;font-size:11px;line-height:10px;color:#d4d4d4;letter-spacing:-0.2px">600</div><div class="a" style="left:1374px;top:107px;width:1px;height:7px;background:#7c7c7c"></div><div class="a" style="left:1389px;top:107px;width:1px;height:7px;background:#7c7c7c"></div><div class="a" style="left:1404px;top:107px;width:1px;height:7px;background:#7c7c7c"></div><div class="a" style="left:1419px;top:97px;width:1px;height:17px;background:#8c8c8c"></div><div class="t" style="left:1421px;top:107px;font-size:11px;line-height:10px;color:#d4d4d4;letter-spacing:-0.2px">650</div>
</div></div>
<div class="a" style="left:77px;top:113px;width:17px;height:825px;background:#353535"></div>
<div class="a" style="left:78px;top:113px;width:16px;height:825px;overflow:hidden">
<div class="a" style="left:-78px;top:-113px;width:94px;height:938px">
<div class="a" style="left:78px;top:122px;width:16px;height:1px;background:#8c8c8c"></div><div class="a" style="left:89px;top:137px;width:5px;height:1px;background:#7c7c7c"></div><div class="a" style="left:89px;top:152px;width:5px;height:1px;background:#7c7c7c"></div><div class="a" style="left:89px;top:167px;width:5px;height:1px;background:#7c7c7c"></div><div class="a" style="left:89px;top:182px;width:5px;height:1px;background:#7c7c7c"></div><div class="a" style="left:78px;top:197px;width:16px;height:1px;background:#8c8c8c"></div><div class="t" style="left:80px;top:156px;font-size:11px;line-height:10px;color:#d4d4d4">3</div><div class="t" style="left:80px;top:166px;font-size:11px;line-height:10px;color:#d4d4d4">0</div><div class="t" style="left:80px;top:176px;font-size:11px;line-height:10px;color:#d4d4d4">0</div><div class="a" style="left:89px;top:212px;width:5px;height:1px;background:#7c7c7c"></div><div class="a" style="left:89px;top:227px;width:5px;height:1px;background:#7c7c7c"></div><div class="a" style="left:89px;top:242px;width:5px;height:1px;background:#7c7c7c"></div><div class="a" style="left:89px;top:257px;width:5px;height:1px;background:#7c7c7c"></div><div class="a" style="left:78px;top:272px;width:16px;height:1px;background:#8c8c8c"></div><div class="t" style="left:80px;top:231px;font-size:11px;line-height:10px;color:#d4d4d4">3</div><div class="t" style="left:80px;top:241px;font-size:11px;line-height:10px;color:#d4d4d4">5</div><div class="t" style="left:80px;top:251px;font-size:11px;line-height:10px;color:#d4d4d4">0</div><div class="a" style="left:89px;top:287px;width:5px;height:1px;background:#7c7c7c"></div><div class="a" style="left:89px;top:302px;width:5px;height:1px;background:#7c7c7c"></div><div class="a" style="left:89px;top:317px;width:5px;height:1px;background:#7c7c7c"></div><div class="a" style="left:89px;top:332px;width:5px;height:1px;background:#7c7c7c"></div><div class="a" style="left:78px;top:347px;width:16px;height:1px;background:#8c8c8c"></div><div class="t" style="left:80px;top:306px;font-size:11px;line-height:10px;color:#d4d4d4">4</div><div class="t" style="left:80px;top:316px;font-size:11px;line-height:10px;color:#d4d4d4">0</div><div class="t" style="left:80px;top:326px;font-size:11px;line-height:10px;color:#d4d4d4">0</div><div class="a" style="left:89px;top:362px;width:5px;height:1px;background:#7c7c7c"></div><div class="a" style="left:89px;top:377px;width:5px;height:1px;background:#7c7c7c"></div><div class="a" style="left:89px;top:392px;width:5px;height:1px;background:#7c7c7c"></div><div class="a" style="left:89px;top:407px;width:5px;height:1px;background:#7c7c7c"></div><div class="a" style="left:78px;top:422px;width:16px;height:1px;background:#8c8c8c"></div><div class="t" style="left:80px;top:381px;font-size:11px;line-height:10px;color:#d4d4d4">4</div><div class="t" style="left:80px;top:391px;font-size:11px;line-height:10px;color:#d4d4d4">5</div><div class="t" style="left:80px;top:401px;font-size:11px;line-height:10px;color:#d4d4d4">0</div><div class="a" style="left:89px;top:437px;width:5px;height:1px;background:#7c7c7c"></div><div class="a" style="left:89px;top:452px;width:5px;height:1px;background:#7c7c7c"></div><div class="a" style="left:89px;top:467px;width:5px;height:1px;background:#7c7c7c"></div><div class="a" style="left:89px;top:482px;width:5px;height:1px;background:#7c7c7c"></div><div class="a" style="left:78px;top:497px;width:16px;height:1px;background:#8c8c8c"></div><div class="t" style="left:80px;top:456px;font-size:11px;line-height:10px;color:#d4d4d4">5</div><div class="t" style="left:80px;top:466px;font-size:11px;line-height:10px;color:#d4d4d4">0</div><div class="t" style="left:80px;top:476px;font-size:11px;line-height:10px;color:#d4d4d4">0</div><div class="a" style="left:89px;top:512px;width:5px;height:1px;background:#7c7c7c"></div><div class="a" style="left:89px;top:527px;width:5px;height:1px;background:#7c7c7c"></div><div class="a" style="left:89px;top:542px;width:5px;height:1px;background:#7c7c7c"></div><div class="a" style="left:89px;top:557px;width:5px;height:1px;background:#7c7c7c"></div><div class="a" style="left:78px;top:572px;width:16px;height:1px;background:#8c8c8c"></div><div class="t" style="left:80px;top:531px;font-size:11px;line-height:10px;color:#d4d4d4">5</div><div class="t" style="left:80px;top:541px;font-size:11px;line-height:10px;color:#d4d4d4">5</div><div class="t" style="left:80px;top:551px;font-size:11px;line-height:10px;color:#d4d4d4">0</div><div class="a" style="left:89px;top:587px;width:5px;height:1px;background:#7c7c7c"></div><div class="a" style="left:89px;top:602px;width:5px;height:1px;background:#7c7c7c"></div><div class="a" style="left:89px;top:617px;width:5px;height:1px;background:#7c7c7c"></div><div class="a" style="left:89px;top:632px;width:5px;height:1px;background:#7c7c7c"></div><div class="a" style="left:78px;top:647px;width:16px;height:1px;background:#8c8c8c"></div><div class="t" style="left:80px;top:606px;font-size:11px;line-height:10px;color:#d4d4d4">6</div><div class="t" style="left:80px;top:616px;font-size:11px;line-height:10px;color:#d4d4d4">0</div><div class="t" style="left:80px;top:626px;font-size:11px;line-height:10px;color:#d4d4d4">0</div><div class="a" style="left:89px;top:662px;width:5px;height:1px;background:#7c7c7c"></div><div class="a" style="left:89px;top:677px;width:5px;height:1px;background:#7c7c7c"></div><div class="a" style="left:89px;top:692px;width:5px;height:1px;background:#7c7c7c"></div><div class="a" style="left:89px;top:707px;width:5px;height:1px;background:#7c7c7c"></div><div class="a" style="left:78px;top:722px;width:16px;height:1px;background:#8c8c8c"></div><div class="t" style="left:80px;top:681px;font-size:11px;line-height:10px;color:#d4d4d4">6</div><div class="t" style="left:80px;top:691px;font-size:11px;line-height:10px;color:#d4d4d4">5</div><div class="t" style="left:80px;top:701px;font-size:11px;line-height:10px;color:#d4d4d4">0</div><div class="a" style="left:89px;top:737px;width:5px;height:1px;background:#7c7c7c"></div><div class="a" style="left:89px;top:752px;width:5px;height:1px;background:#7c7c7c"></div><div class="a" style="left:89px;top:767px;width:5px;height:1px;background:#7c7c7c"></div><div class="a" style="left:89px;top:782px;width:5px;height:1px;background:#7c7c7c"></div><div class="a" style="left:78px;top:797px;width:16px;height:1px;background:#8c8c8c"></div><div class="t" style="left:80px;top:756px;font-size:11px;line-height:10px;color:#d4d4d4">7</div><div class="t" style="left:80px;top:766px;font-size:11px;line-height:10px;color:#d4d4d4">0</div><div class="t" style="left:80px;top:776px;font-size:11px;line-height:10px;color:#d4d4d4">0</div><div class="a" style="left:89px;top:812px;width:5px;height:1px;background:#7c7c7c"></div><div class="a" style="left:89px;top:827px;width:5px;height:1px;background:#7c7c7c"></div><div class="a" style="left:89px;top:842px;width:5px;height:1px;background:#7c7c7c"></div><div class="a" style="left:89px;top:857px;width:5px;height:1px;background:#7c7c7c"></div><div class="a" style="left:78px;top:872px;width:16px;height:1px;background:#8c8c8c"></div><div class="t" style="left:80px;top:831px;font-size:11px;line-height:10px;color:#d4d4d4">7</div><div class="t" style="left:80px;top:841px;font-size:11px;line-height:10px;color:#d4d4d4">5</div><div class="t" style="left:80px;top:851px;font-size:11px;line-height:10px;color:#d4d4d4">0</div><div class="a" style="left:89px;top:887px;width:5px;height:1px;background:#7c7c7c"></div><div class="a" style="left:89px;top:902px;width:5px;height:1px;background:#7c7c7c"></div><div class="a" style="left:89px;top:917px;width:5px;height:1px;background:#7c7c7c"></div><div class="a" style="left:89px;top:932px;width:5px;height:1px;background:#7c7c7c"></div>
</div></div>
<!-- ruler corner -->
<div class="a" style="left:77px;top:97px;width:17px;height:17px;background:#353535"></div>
<div class="a" style="left:84px;top:98px;width:1px;height:14px;background:#7c7c7c"></div>
<div class="a" style="left:79px;top:103px;width:14px;height:1px;background:#7c7c7c"></div>
<div class="a" style="left:93px;top:97px;width:1px;height:16px;background:#7c7c7c"></div>
<!-- canvas -->
<div class="a" style="left:94px;top:114px;width:1348px;height:824px;background:#636363"></div>
<div class="a" style="left:94px;top:168px;width:114px;height:92px;background:repeating-linear-gradient(180deg,#2b2728 0 2px,#6a6363 2px 4.51px)"></div>
<div class="a" style="left:445px;top:114px;width:1px;height:824px;background:#000"></div>
<div class="a" style="left:446px;top:114px;width:996px;height:824px;background:#ffffff"></div>
<!-- artwork -->
<svg class="a" style="left:446px;top:114px" width="996" height="824" viewBox="446 114 996 824">
<rect x="757.5" y="91.5" width="437" height="727.5" fill="none" stroke="#4a70d4" stroke-width="1"/>
<path d="M757.5 306 C757.5 196.6 844.2 89.9 954.9 89.9 C1032.7 89.9 1168.8 119.9 1168.8 293.4 C1168.8 392.1 1063.1 488.0 1014.8 540.3 L757.5 819" fill="none" stroke="#161a30" stroke-width="1.35"/>
<path d="M757.5 306 C757.5 196.6 844.2 89.9 954.9 89.9 C1032.7 89.9 1168.8 119.9 1168.8 293.4 C1168.8 392.1 1063.1 488.0 1014.8 540.3 L757.5 819" fill="none" stroke="#5070d8" stroke-width="0.7" opacity="0.6"/>
<path d="M757.5 819.5 H1194.5" stroke="#4a70d4" stroke-width="1.6"/>
<g fill="#fff" stroke="#4a70d4" stroke-width="1">
<rect x="754.5" y="452.5" width="6" height="6"/>
<rect x="1191.5" y="452.5" width="6" height="6"/>
<rect x="754.5" y="816.5" width="6" height="6"/>
<rect x="972.5" y="816.5" width="6" height="6"/>
<rect x="1191.5" y="816.5" width="6" height="6"/>
</g>
</svg>
<!-- v scrollbar -->
<div class="a" style="left:1442px;top:97px;width:16px;height:841px;background:#4a4a4a"></div>
<svg class="a" style="left:1445px;top:103px" width="11" height="8"><path d="M1.5 6l4-4 4 4" stroke="#6e6e6e" stroke-width="1.6" fill="none"/></svg>
<div class="a" style="left:1443px;top:506px;width:14px;height:25px;background:#5f5f5f;border-radius:6px"></div>
<svg class="a" style="left:1445px;top:925px" width="11" height="8"><path d="M1.5 2l4 4 4-4" stroke="#6e6e6e" stroke-width="1.6" fill="none"/></svg>
<!-- status bar -->
<div class="a" style="left:77px;top:938px;width:1381px;height:17px;background:#525252"></div>
<div class="a" style="left:81px;top:939px;width:50px;height:16px;background:#474747"></div>
<div class="t" style="left:84px;top:941px;font-size:10.5px;color:#e8e8e8;letter-spacing:-0.3px">150%</div>
<div class="a" style="left:131px;top:939px;width:17px;height:16px;background:#4c4c4c"></div>
<svg class="a" style="left:135px;top:944px" width="10" height="7"><path d="M1.5 1.5l3.5 3.5 3.5-3.5" stroke="#d8d8d8" stroke-width="1.6" fill="none"/></svg>
<svg class="a" style="left:155px;top:941px" width="36" height="12"><path d="M2 1v10" stroke="#6c6c6c" stroke-width="1.6"/><path d="M10 1L4 6l6 5z M26 1l-6 5 6 5z" fill="#6c6c6c"/></svg>
<div class="a" style="left:192px;top:939px;width:40px;height:16px;background:#474747"></div>
<div class="t" style="left:196px;top:940px;font-size:11px;color:#e0e0e0">1</div>
<div class="a" style="left:232px;top:939px;width:17px;height:16px;background:#4c4c4c"></div>
<svg class="a" style="left:235px;top:944px" width="10" height="7"><path d="M1.5 1.5l3.5 3.5 3.5-3.5" stroke="#d8d8d8" stroke-width="1.6" fill="none"/></svg>
<svg class="a" style="left:255px;top:941px" width="36" height="12"><path d="M4 1l6 5-6 5z M20 1l6 5-6 5z" fill="#6c6c6c"/><path d="M28 1v10" stroke="#6c6c6c" stroke-width="1.6"/></svg>
<div class="a" style="left:292px;top:939px;width:1px;height:16px;background:#474747"></div>
<div class="t" style="left:380px;top:941px;font-size:12px;color:#d0d0d0">选择</div>
<svg class="a" style="left:496px;top:941px" width="10" height="12"><path d="M2 1l6 5-6 5z" fill="#d8d8d8"/></svg>
<svg class="a" style="left:514px;top:941px" width="8" height="12"><path d="M6 2L2 6l4 4" stroke="#b0b0b0" stroke-width="1.4" fill="none"/></svg>
<div class="a" style="left:956px;top:939px;width:26px;height:15px;background:#5f5f5f;border-radius:7px"></div>
<svg class="a" style="left:1430px;top:941px" width="8" height="12"><path d="M2 2l4 4-4 4" stroke="#b0b0b0" stroke-width="1.4" fill="none"/></svg>
<div class="a" style="left:1442px;top:938px;width:16px;height:17px;background:#4a4a4a"></div>
<div class="a" style="left:1px;top:954px;width:1749px;height:1px;background:#3a3a3a"></div>

<!-- DOCK -->
<div class="a" style="left:1458px;top:68px;width:3px;height:887px;background:#393939"></div>
<div class="a" style="left:1461px;top:68px;width:285px;height:12px;background:#434343"></div>
<svg class="a" style="left:1482px;top:70px" width="12" height="8"><path d="M5 1L1.5 4 5 7zM10 1L6.5 4 10 7z" fill="#d0d0d0"/></svg>
<svg class="a" style="left:1731px;top:70px" width="12" height="8"><path d="M1 1l3.5 3L1 7zM6 1l3.5 3L6 7z" fill="#d0d0d0"/></svg>
<div class="a" style="left:1461px;top:80px;width:38px;height:875px;background:#535353"></div>
<div class="a" style="left:1498px;top:80px;width:2px;height:875px;background:#3e3e3e"></div>
<div class="a" style="left:1461px;top:149px;width:37px;height:1px;background:#3c3c3c"></div><div class="a" style="left:1470px;top:84px;width:20px;height:5px;background:repeating-linear-gradient(90deg,#393939 0 1px,transparent 1px 2px)"></div><div class="a" style="left:1461px;top:218px;width:37px;height:1px;background:#3c3c3c"></div><div class="a" style="left:1470px;top:154px;width:20px;height:5px;background:repeating-linear-gradient(90deg,#393939 0 1px,transparent 1px 2px)"></div><div class="a" style="left:1461px;top:287px;width:37px;height:1px;background:#3c3c3c"></div><div class="a" style="left:1470px;top:223px;width:20px;height:5px;background:repeating-linear-gradient(90deg,#393939 0 1px,transparent 1px 2px)"></div><div class="a" style="left:1461px;top:356px;width:37px;height:1px;background:#3c3c3c"></div><div class="a" style="left:1470px;top:292px;width:20px;height:5px;background:repeating-linear-gradient(90deg,#393939 0 1px,transparent 1px 2px)"></div><div class="a" style="left:1461px;top:396px;width:37px;height:1px;background:#3c3c3c"></div><div class="a" style="left:1470px;top:361px;width:20px;height:5px;background:repeating-linear-gradient(90deg,#393939 0 1px,transparent 1px 2px)"></div><div class="a" style="left:1461px;top:438px;width:37px;height:1px;background:#3c3c3c"></div><div class="a" style="left:1470px;top:401px;width:20px;height:5px;background:repeating-linear-gradient(90deg,#393939 0 1px,transparent 1px 2px)"></div>
<svg class="a" style="left:1471px;top:95px" width="18" height="18"><circle cx="9" cy="9" r="7.5" fill="none" stroke="#cfcfcf" stroke-width="1.4" stroke-dasharray="2 1.4"/><circle cx="9" cy="9" r="5.5" fill="#cfcfcf"/></svg>
<svg class="a" style="left:1472px;top:123px" width="17" height="17"><defs><linearGradient id="dg1" x1="0" y1="0" x2="1" y2="1"><stop offset="0" stop-color="#888"/><stop offset="1" stop-color="#ddd"/></linearGradient></defs><path d="M1.5 1.5v14h14a14 14 0 0 0-14-14z" fill="url(#dg1)" stroke="#cfcfcf" stroke-width="1.3"/></svg>
<svg class="a" style="left:1472px;top:163px" width="17" height="18"><path d="M1.5 1v16" stroke="#cfcfcf" stroke-width="1.4"/><rect x="3" y="3" width="7" height="5" fill="#cfcfcf"/><rect x="3" y="10" width="12" height="5" fill="#cfcfcf"/></svg>
<div class="a" style="left:1466px;top:190px;width:28px;height:22px;background:#2f2f2f;border-radius:2px"></div>
<svg class="a" style="left:1472px;top:193px" width="17" height="17"><rect x="1" y="1" width="9" height="9" fill="#cfcfcf"/><rect x="6" y="6" width="9" height="9" fill="#cfcfcf" stroke="#2f2f2f" stroke-width="1"/></svg>
<svg class="a" style="left:1472px;top:230px" width="18" height="20"><rect x="4" y="11" width="9" height="8" fill="#cfcfcf"/><path d="M5 11L2 3M8.5 11V1M12 11l4-7" stroke="#cfcfcf" stroke-width="2.2"/><circle cx="2.5" cy="4" r="2.2" fill="#cfcfcf"/><circle cx="15" cy="5" r="2.5" fill="#cfcfcf"/></svg>
<svg class="a" style="left:1471px;top:260px" width="19" height="19"><circle cx="9.5" cy="5" r="4.2" fill="#cfcfcf"/><circle cx="4.5" cy="10.5" r="4.2" fill="#cfcfcf"/><circle cx="14.5" cy="10.5" r="4.2" fill="#cfcfcf"/><path d="M9.5 9v5l-3 4h6l-3-4" fill="#cfcfcf"/></svg>
<svg class="a" style="left:1470px;top:300px" width="21" height="19"><text x="8" y="13" font-family="Liberation Sans" font-size="15" fill="#cfcfcf">A</text><rect x="1.5" y="10.5" width="5" height="5" fill="none" stroke="#cfcfcf" stroke-width="1.2"/><rect x="4.5" y="13.5" width="5" height="5" fill="#535353" stroke="#cfcfcf" stroke-width="1.2"/></svg>
<svg class="a" style="left:1470px;top:329px" width="21" height="19"><path d="M12 1h6v17M15 1v17" stroke="#cfcfcf" stroke-width="1.6"/><circle cx="12" cy="5" r="3.5" fill="#cfcfcf"/><rect x="1.5" y="10.5" width="5" height="5" fill="none" stroke="#cfcfcf" stroke-width="1.2"/><rect x="4.5" y="13.5" width="5" height="5" fill="#535353" stroke="#cfcfcf" stroke-width="1.2"/></svg>
<svg class="a" style="left:1469px;top:369px" width="22" height="21"><text x="2" y="17" font-family="Liberation Serif" font-style="italic" font-size="19" fill="#cfcfcf">A</text></svg>
<svg class="a" style="left:1471px;top:411px" width="19" height="19"><path d="M8 3H2v14h14v-6" stroke="#cfcfcf" stroke-width="2" fill="none"/><path d="M8 11L16 3M11 2.5h5.5V8" stroke="#cfcfcf" stroke-width="2" fill="none"/></svg>

<div class="a" style="left:1500px;top:80px;width:246px;height:875px;background:#535353"></div><div class="a" style="left:1745px;top:68px;width:2px;height:887px;background:#3a3a3a"></div><div class="a" style="left:1500px;top:80px;width:245px;height:27px;background:#444444"></div><div class="a" style="left:1500px;top:80px;width:42px;height:27px;background:#4a4a4a;border-right:1px solid #3e3e3e"></div><div class="t" style="left:1508px;top:87px;font-size:12.5px;color:#b4b4b4">画板</div><div class="a" style="left:1542px;top:80px;width:44px;height:27px;background:#4a4a4a;border-right:1px solid #3e3e3e"></div><div class="t" style="left:1550px;top:87px;font-size:12.5px;color:#b4b4b4">链接</div><div class="a" style="left:1586px;top:80px;width:42px;height:27px;background:#535353;border-right:1px solid #3e3e3e"></div><div class="t" style="left:1594px;top:87px;font-size:12.5px;color:#e8e8e8">图层</div><svg class="a" style="left:1729px;top:89px" width="13" height="10"><path d="M1 1.5h11M1 3.5h11M1 5.5h11M1 7.5h11" stroke="#d8d8d8" stroke-width="1"/></svg><div class="a" style="left:1586px;top:80px;width:42px;height:28px;background:#535353"></div><div class="t" style="left:1594px;top:87px;font-size:12.5px;color:#e8e8e8;">图层</div><div class="a" style="left:1503px;top:110px;width:239px;height:170px;background:#4f4f4f;border:1px solid #484848"></div><div class="a" style="left:1506px;top:114px;width:234px;height:22px;background:#4f6585"></div><svg class="a" style="left:1508px;top:119px" width="17" height="11"><path d="M1 5.5C4 1 13 1 16 5.5 13 10 4 10 1 5.5z" fill="#d8d8d8"/><circle cx="8.5" cy="5.5" r="2.6" fill="#4b5f7f"/><circle cx="8.5" cy="5.5" r="1.2" fill="#d8d8d8"/></svg><div class="a" style="left:1530px;top:114px;width:1px;height:22px;background:#465875"></div><div class="a" style="left:1550px;top:116px;width:3px;height:18px;background:#4f6ff5"></div><svg class="a" style="left:1560px;top:119px" width="8" height="12"><path d="M2 1.5l4 4.5-4 4.5" stroke="#e0e0e0" stroke-width="1.6" fill="none"/></svg><div class="a" style="left:1578px;top:116px;width:19px;height:19px;background:#fff;border:1px solid #000"></div><div class="a" style="left:1580px;top:120px;width:6px;height:2px;background:#000"></div><div class="t" style="left:1588px;top:119px;font-size:10px;color:#aaa;">2</div><div class="t" style="left:1604px;top:118px;font-size:12.5px;color:#e0e0e0;">图层 1</div><svg class="a" style="left:1708px;top:119px" width="12" height="12"><circle cx="6" cy="6" r="4.5" fill="none" stroke="#d8d8d8" stroke-width="1.3"/></svg><div class="a" style="left:1723px;top:121px;width:8px;height:8px;background:#4b5f7f;border:1.5px solid #0a1a8a;outline:1px solid #c8c8e8"></div><svg class="a" style="left:1733px;top:114px" width="7" height="7"><path d="M0 0h7v7z" fill="#d8d8d8"/></svg><div class="t" style="left:1505px;top:282px;font-size:12px;color:#cfcfcf;">1&nbsp;&nbsp;个图层</div><svg class="a" style="left:1600px;top:281px" width="16" height="16"><circle cx="9.5" cy="6.5" r="4.5" fill="none" stroke="#cfcfcf" stroke-width="1.6"/><path d="M6 10L1.5 14.5" stroke="#cfcfcf" stroke-width="2.2"/></svg>
<svg class="a" style="left:1627px;top:282px" width="14" height="14"><rect x="1" y="1" width="9" height="9" fill="none" stroke="#cfcfcf" stroke-width="1.3"/><rect x="4" y="4" width="9" height="9" fill="none" stroke="#cfcfcf" stroke-width="1.3"/><rect x="4" y="4" width="6" height="6" fill="#cfcfcf"/></svg>
<svg class="a" style="left:1652px;top:282px" width="18" height="14"><path d="M1 6h5M3 3l-2 3 2 3" stroke="#cfcfcf" stroke-width="1.3" fill="none"/><rect x="7" y="2" width="9" height="10" fill="#cfcfcf"/><path d="M9 12v-4h4" stroke="#535353" stroke-width="1.4" fill="none"/></svg>
<svg class="a" style="left:1680px;top:282px" width="14" height="14"><path d="M1 3h12v10H6L1 8z" fill="#cfcfcf"/><path d="M5 13V8H1" stroke="#535353" stroke-width="1.4" fill="none"/></svg>
<svg class="a" style="left:1706px;top:281px" width="13" height="15"><path d="M1 3h11M5 1h3M2.5 4v10h8V4M5 6v6M8 6v6" stroke="#6a6a6a" stroke-width="1.2" fill="none"/></svg>
<div class="a" style="left:1500px;top:298px;width:245px;height:2px;background:#3c3c3c"></div><div class="a" style="left:1500px;top:300px;width:245px;height:28px;background:#444444"></div><div class="a" style="left:1501px;top:300px;width:47px;height:28px;background:#535353;border-right:1px solid #3e3e3e"></div><svg class="a" style="left:1506px;top:308px" width="7" height="11"><path d="M1 4l2.5-2.5L6 4M1 7l2.5 2.5L6 7" stroke="#c8c8c8" stroke-width="1.1" fill="none"/></svg><div class="t" style="left:1517px;top:307px;font-size:12.5px;color:#e8e8e8">描边</div><div class="a" style="left:1548px;top:300px;width:42px;height:28px;background:#4a4a4a;border-right:1px solid #3e3e3e"></div><div class="t" style="left:1556px;top:307px;font-size:12.5px;color:#b4b4b4">色板</div><div class="a" style="left:1590px;top:300px;width:66px;height:28px;background:#4a4a4a;border-right:1px solid #3e3e3e"></div><div class="t" style="left:1598px;top:307px;font-size:12.5px;color:#b4b4b4">图形样式</div><svg class="a" style="left:1729px;top:309px" width="13" height="10"><path d="M1 1.5h11M1 3.5h11M1 5.5h11M1 7.5h11" stroke="#d8d8d8" stroke-width="1"/></svg><div class="t" style="left:1530px;top:338px;font-size:12.5px;color:#cfcfcf;">粗细：</div><div class="a" style="left:1567px;top:336px;width:16px;height:20px;background:#4a4a4a;border:1px solid #4e4e4e"></div><svg class="a" style="left:1570px;top:339px" width="9" height="14"><path d="M1.5 5l3-3 3 3M1.5 9l3 3 3-3" stroke="#c8c8c8" stroke-width="1.2" fill="none"/></svg><div class="a" style="left:1582px;top:336px;width:51px;height:20px;background:#474747;border:1px solid #4e4e4e"></div><div class="t" style="left:1587px;top:338px;font-size:12px;color:#e8e8e8;font-family:'Liberation Mono',monospace">1 pt</div><div class="a" style="left:1633px;top:336px;width:19px;height:20px;background:#4c4c4c;border:1px solid #4e4e4e"></div><svg class="a" style="left:1638px;top:343px" width="10" height="7"><path d="M1.5 1.5l3.5 3.5 3.5-3.5" stroke="#d8d8d8" stroke-width="1.6" fill="none"/></svg><div class="t" style="left:1530px;top:364px;font-size:12.5px;color:#cfcfcf;">端点：</div><div class="t" style="left:1530px;top:391px;font-size:12.5px;color:#cfcfcf;">边角：</div><div class="t" style="left:1506px;top:418px;font-size:12.5px;color:#cfcfcf;">对齐描边：</div><div class="a" style="left:1567px;top:361px;width:20px;height:21px;background:#2f2f2f;border:1px solid #2a2a2a"></div><div class="a" style="left:1589px;top:361px;width:20px;height:21px;background:#4e4e4e;border:1px solid #575757"></div><div class="a" style="left:1613px;top:361px;width:20px;height:21px;background:#4e4e4e;border:1px solid #575757"></div><div class="a" style="left:1567px;top:388px;width:20px;height:21px;background:#2f2f2f;border:1px solid #2a2a2a"></div><div class="a" style="left:1590px;top:388px;width:20px;height:21px;background:#4e4e4e;border:1px solid #575757"></div><div class="a" style="left:1613px;top:388px;width:20px;height:21px;background:#4e4e4e;border:1px solid #575757"></div><div class="a" style="left:1567px;top:415px;width:20px;height:21px;background:#2f2f2f;border:1px solid #2a2a2a"></div><div class="a" style="left:1590px;top:415px;width:20px;height:21px;background:#4e4e4e;border:1px solid #575757"></div><div class="a" style="left:1613px;top:415px;width:20px;height:21px;background:#4e4e4e;border:1px solid #575757"></div>
<svg class="a" style="left:1571px;top:365px" width="15" height="15"><path d="M3 1h10v13H3V9.5a2 2 0 0 0 0-4z" fill="#d4d4d4"/><path d="M4 7.5h9" stroke="#2f2f2f" stroke-width="1.3"/><circle cx="4" cy="7.5" r="1.5" fill="#2f2f2f"/></svg><svg class="a" style="left:1593px;top:365px" width="15" height="15"><path d="M13 1H9a6.5 6.5 0 0 0 0 13h4z" fill="#d4d4d4"/><path d="M7.5 7.5h5.5" stroke="#4e4e4e" stroke-width="1.3"/><rect x="6" y="6" width="3" height="3" fill="#4e4e4e"/></svg><svg class="a" style="left:1616px;top:365px" width="15" height="15"><path d="M1 1h12v13H1z" fill="#d4d4d4"/><path d="M6 7.5h7" stroke="#4e4e4e" stroke-width="1.3"/><rect x="5" y="6" width="3" height="3" fill="#4e4e4e"/></svg><svg class="a" style="left:1571px;top:392px" width="15" height="15"><path d="M1 14V1h12v6H7v7z" fill="#d4d4d4"/><path d="M4 14V4h9" stroke="#2f2f2f" stroke-width="1.2" fill="none"/><circle cx="4" cy="4" r="1.3" fill="#2f2f2f"/></svg><svg class="a" style="left:1593px;top:392px" width="15" height="15"><path d="M1 14V7a6 6 0 0 1 6-6h6v6H7v7z" fill="#d4d4d4"/><path d="M4 14V4h9" stroke="#4e4e4e" stroke-width="1.2" fill="none"/></svg><svg class="a" style="left:1616px;top:392px" width="15" height="15"><path d="M1 14V6l5-5h7v6H7v7z" fill="#d4d4d4"/><path d="M4 14V4h9" stroke="#4e4e4e" stroke-width="1.2" fill="none"/></svg><svg class="a" style="left:1571px;top:419px" width="15" height="15"><path d="M1 1h6v8h6v5H1z" fill="#d4d4d4"/><path d="M4 1v10h9" stroke="#2f2f2f" stroke-width="1.2" fill="none"/></svg><svg class="a" style="left:1593px;top:419px" width="15" height="15"><path d="M3 1h4v9h6v4H3z" fill="#707070"/><path d="M4 1v10h9" stroke="#888" stroke-width="0.9" fill="none"/></svg><svg class="a" style="left:1616px;top:419px" width="15" height="15"><path d="M2 1h6v8h5v5H2z" fill="#6e6e6e"/><path d="M6 1v10h7" stroke="#7a7a7a" stroke-width="0.9" fill="none"/></svg><div class="t" style="left:1657px;top:391px;font-size:12.5px;color:#cfcfcf;">限制：</div><div class="a" style="left:1694px;top:388px;width:39px;height:20px;background:#474747;border:1px solid #4e4e4e"></div><div class="t" style="left:1699px;top:390px;font-size:12px;color:#e8e8e8;font-family:'Liberation Mono',monospace">4</div><svg class="a" style="left:1735px;top:395px" width="7" height="7"><path d="M1 1h5M1 6h5M1.5 1.5l4 4" stroke="#c8c8c8" stroke-width="1"/></svg><div class="a" style="left:1506px;top:442px;width:234px;height:1px;background:#4a4a4a"></div><div class="a" style="left:1507px;top:455px;width:12px;height:12px;border:1px solid #d8d8d8"></div><div class="t" style="left:1525px;top:453px;font-size:12.5px;color:#e0e0e0;">虚线</div><div class="a" style="left:1665px;top:450px;width:37px;height:21px;background:#4e4e4e;border:1px solid #575757"></div><div class="a" style="left:1702px;top:450px;width:40px;height:21px;background:#4e4e4e;border:1px solid #575757"></div><svg class="a" style="left:1670px;top:454px" width="68" height="13"><path d="M2 3v7M6 2h3M13 2h5M22 2h3M29 3v7M6 11h3M13 11h5M22 11h3" stroke="#777" stroke-width="1.5"/><path d="M40 3v7M44 2h3M51 2h5M60 2h3M66 3v7M44 11h3M51 11h5M60 11h3" stroke="#777" stroke-width="1.5"/></svg><div class="a" style="left:1507px;top:476px;width:34px;height:20px;background:#525252;border:1px solid #565656"></div><div class="t" style="left:1512px;top:498px;font-size:12px;color:#6c6c6c;">虚线</div><div class="a" style="left:1546px;top:476px;width:34px;height:20px;background:#525252;border:1px solid #565656"></div><div class="t" style="left:1551px;top:498px;font-size:12px;color:#6c6c6c;">间隙</div><div class="a" style="left:1586px;top:476px;width:34px;height:20px;background:#525252;border:1px solid #565656"></div><div class="t" style="left:1591px;top:498px;font-size:12px;color:#6c6c6c;">虚线</div><div class="a" style="left:1625px;top:476px;width:34px;height:20px;background:#525252;border:1px solid #565656"></div><div class="t" style="left:1630px;top:498px;font-size:12px;color:#6c6c6c;">间隙</div><div class="a" style="left:1665px;top:476px;width:34px;height:20px;background:#525252;border:1px solid #565656"></div><div class="t" style="left:1670px;top:498px;font-size:12px;color:#6c6c6c;">虚线</div><div class="a" style="left:1704px;top:476px;width:34px;height:20px;background:#525252;border:1px solid #565656"></div><div class="t" style="left:1709px;top:498px;font-size:12px;color:#6c6c6c;">间隙</div><div class="a" style="left:1506px;top:517px;width:234px;height:1px;background:#4a4a4a"></div><div class="t" style="left:1530px;top:527px;font-size:12.5px;color:#cfcfcf;">箭头：</div><div class="a" style="left:1567px;top:525px;width:37px;height:19px;background:#e6e6e6"></div><div class="a" style="left:1572px;top:533px;width:27px;height:3px;background:#000"></div><div class="a" style="left:1604px;top:525px;width:18px;height:19px;background:#474747;border:1px solid #4e4e4e"></div><svg class="a" style="left:1608px;top:532px" width="10" height="7"><path d="M1.5 1.5l3.5 3.5 3.5-3.5" stroke="#d8d8d8" stroke-width="1.6" fill="none"/></svg><div class="a" style="left:1630px;top:525px;width:37px;height:19px;background:#e6e6e6"></div><div class="a" style="left:1635px;top:533px;width:27px;height:3px;background:#000"></div><div class="a" style="left:1667px;top:525px;width:18px;height:19px;background:#474747;border:1px solid #4e4e4e"></div><svg class="a" style="left:1671px;top:532px" width="10" height="7"><path d="M1.5 1.5l3.5 3.5 3.5-3.5" stroke="#d8d8d8" stroke-width="1.6" fill="none"/></svg><svg class="a" style="left:1722px;top:528px" width="14" height="13"><path d="M1 4h11M9 1l3 3-3 3M13 9H2M5 6L2 9l3 3" stroke="#767676" stroke-width="1.6" fill="none"/></svg><div class="t" style="left:1530px;top:556px;font-size:12.5px;color:#6c6c6c;">缩放：</div><div class="a" style="left:1567px;top:553px;width:17px;height:21px;background:#505050;border:1px solid #575757"></div><svg class="a" style="left:1571px;top:556px" width="9" height="14"><path d="M1.5 5l3-3 3 3M1.5 9l3 3 3-3" stroke="#6a6a6a" stroke-width="1.2" fill="none"/></svg><div class="a" style="left:1584px;top:553px;width:38px;height:21px;background:#505050;border:1px solid #575757"></div><div class="t" style="left:1587px;top:556px;font-size:11px;color:#707070;">100%</div><div class="a" style="left:1630px;top:553px;width:17px;height:21px;background:#505050;border:1px solid #575757"></div><svg class="a" style="left:1634px;top:556px" width="9" height="14"><path d="M1.5 5l3-3 3 3M1.5 9l3 3 3-3" stroke="#6a6a6a" stroke-width="1.2" fill="none"/></svg><div class="a" style="left:1647px;top:553px;width:38px;height:21px;background:#505050;border:1px solid #575757"></div><div class="t" style="left:1650px;top:556px;font-size:11px;color:#707070;">100%</div><svg class="a" style="left:1720px;top:555px" width="16" height="18"><path d="M3 3l10 12M5 8a3 3 0 0 1 0-5l2-1M11 10a3 3 0 0 1 0 5l-2 1" stroke="#707070" stroke-width="1.8" fill="none"/></svg><div class="t" style="left:1530px;top:586px;font-size:12.5px;color:#6c6c6c;">对齐：</div><div class="a" style="left:1567px;top:583px;width:22px;height:21px;background:#505050;border:1px solid #575757"></div><div class="a" style="left:1589px;top:583px;width:22px;height:21px;background:#505050;border:1px solid #575757"></div><svg class="a" style="left:1571px;top:588px" width="38" height="11"><path d="M2 3h8M2 8h12M11 5l3 3-3 3M24 3h10M24 8h12M33 5l3 3-3 3" stroke="#6e6e6e" stroke-width="1.5" fill="none"/></svg><div class="a" style="left:1506px;top:611px;width:234px;height:1px;background:#4a4a4a"></div><div class="t" style="left:1506px;top:621px;font-size:12.5px;color:#cfcfcf;">配置文件：</div><div class="a" style="left:1567px;top:620px;width:87px;height:18px;background:#e6e6e6"></div><div class="a" style="left:1572px;top:627px;width:48px;height:3px;background:#000"></div><div class="t" style="left:1626px;top:621px;font-size:12px;color:#222;">等比</div><div class="a" style="left:1654px;top:620px;width:18px;height:18px;background:#474747;border:1px solid #4e4e4e"></div><svg class="a" style="left:1658px;top:626px" width="10" height="7"><path d="M1.5 1.5l3.5 3.5 3.5-3.5" stroke="#d8d8d8" stroke-width="1.6" fill="none"/></svg><svg class="a" style="left:1696px;top:621px" width="14" height="14"><path d="M1 3l5 4-5 4zM13 3l-5 4 5 4z" fill="none" stroke="#707070" stroke-width="1.2"/><path d="M7 1v12" stroke="#707070" stroke-width="1.2"/></svg><svg class="a" style="left:1721px;top:620px" width="14" height="16"><path d="M3 1l4 5 4-5zM3 15l4-5 4 5z" fill="none" stroke="#707070" stroke-width="1.2"/><path d="M1 8h12" stroke="#707070" stroke-width="1.2"/></svg><div class="a" style="left:1500px;top:646px;width:245px;height:2px;background:#3c3c3c"></div>
<div class="a" style="left:1500px;top:648px;width:245px;height:28px;background:#444444"></div><div class="a" style="left:1500px;top:648px;width:41px;height:28px;background:#4a4a4a;border-right:1px solid #3e3e3e"></div><div class="t" style="left:1508px;top:655px;font-size:12.5px;color:#b4b4b4">颜色</div><div class="a" style="left:1541px;top:648px;width:56px;height:28px;background:#4a4a4a;border-right:1px solid #3e3e3e"></div><div class="t" style="left:1549px;top:655px;font-size:12.5px;color:#b4b4b4">透明度</div><div class="a" style="left:1597px;top:648px;width:47px;height:28px;background:#535353;border-right:1px solid #3e3e3e"></div><svg class="a" style="left:1602px;top:656px" width="7" height="11"><path d="M1 4l2.5-2.5L6 4M1 7l2.5 2.5L6 7" stroke="#c8c8c8" stroke-width="1.1" fill="none"/></svg><div class="t" style="left:1613px;top:655px;font-size:12.5px;color:#e8e8e8">渐变</div><svg class="a" style="left:1729px;top:657px" width="13" height="10"><path d="M1 1.5h11M1 3.5h11M1 5.5h11M1 7.5h11" stroke="#d8d8d8" stroke-width="1"/></svg><svg class="a" style="left:1506px;top:682px" width="32" height="32"><defs><linearGradient id="gg1"><stop offset="0" stop-color="#fafafa"/><stop offset="0.5" stop-color="#a39a99"/><stop offset="1" stop-color="#2a1f1f"/></linearGradient></defs><rect x="0.5" y="0.5" width="31" height="31" fill="url(#gg1)" stroke="#3a3a3a"/></svg><svg class="a" style="left:1540px;top:694px" width="7" height="5"><path d="M0 0h7L3.5 4z" fill="#d0d0d0"/></svg><div class="t" style="left:1555px;top:686px;font-size:12.5px;color:#d8d8d8;">类型：</div><div class="a" style="left:1593px;top:683px;width:147px;height:19px;background:#4a4a4a;border:1px solid #575757"></div><svg class="a" style="left:1730px;top:689px" width="10" height="7"><path d="M1.5 1.5l3.5 3.5 3.5-3.5" stroke="#d8d8d8" stroke-width="1.6" fill="none"/></svg><div class="t" style="left:1556px;top:712px;font-size:12.5px;color:#6a6a6a;">描边：</div><div class="a" style="left:1593px;top:708px;width:22px;height:21px;background:#505050;border:1px solid #575757"></div><div class="a" style="left:1616px;top:708px;width:22px;height:21px;background:#505050;border:1px solid #575757"></div><div class="a" style="left:1639px;top:708px;width:22px;height:21px;background:#505050;border:1px solid #575757"></div><svg class="a" style="left:1596px;top:711px" width="62" height="15"><g fill="#6c6c6c"><path d="M2 2h14v4H6v8H2z"/><path d="M25 2h14v4h-4v8h-4V6h-6z"/><path d="M48 2h12v12h-4V6h-8z"/></g></svg><svg class="a" style="left:1507px;top:720px" width="32" height="30"><rect x="12" y="11" width="17" height="17" fill="#000" stroke="#e8e8e8"/><rect x="16" y="15" width="9" height="9" fill="#535353" stroke="#e8e8e8"/><rect x="0.5" y="0.5" width="18" height="18" fill="#fff" stroke="#ccc"/><path d="M1 18L18 1" stroke="#d01420" stroke-width="2"/></svg><svg class="a" style="left:1572px;top:737px" width="16" height="14"><path d="M1 13h14M1 13L12 2M7 13a6 6 0 0 0-2-5" stroke="#6e6e6e" stroke-width="1.3" fill="none"/></svg><div class="a" style="left:1593px;top:735px;width:67px;height:20px;background:#505050;border:1px solid #575757"></div><svg class="a" style="left:1646px;top:742px" width="10" height="7"><path d="M1.5 1.5l3.5 3.5 3.5-3.5" stroke="#6a6a6a" stroke-width="1.6" fill="none"/></svg><svg class="a" style="left:1570px;top:763px" width="20" height="17"><path d="M2 1v15M0 3l2-2 2 2M0 14l2 2 2-2" stroke="#6e6e6e" stroke-width="1.2" fill="none"/><ellipse cx="12" cy="8" rx="6" ry="4" fill="none" stroke="#6e6e6e" stroke-width="1.3"/><path d="M6 15h12" stroke="#6e6e6e" stroke-width="1"/></svg><div class="a" style="left:1593px;top:762px;width:67px;height:20px;background:#505050;border:1px solid #575757"></div><svg class="a" style="left:1646px;top:769px" width="10" height="7"><path d="M1.5 1.5l3.5 3.5 3.5-3.5" stroke="#6a6a6a" stroke-width="1.6" fill="none"/></svg><svg class="a" style="left:1513px;top:760px" width="18" height="15"><rect x="1" y="1" width="7" height="5" fill="none" stroke="#6a6a6a"/><rect x="8" y="8" width="7" height="5" fill="none" stroke="#6a6a6a"/><path d="M11 2h5l-2.5 3zM1 10h5" stroke="#6a6a6a" fill="#6a6a6a"/></svg><svg class="a" style="left:1511px;top:795px" width="200" height="19"><defs><linearGradient id="gg2"><stop offset="0" stop-color="#fcfcfc"/><stop offset="0.5" stop-color="#a59c9b"/><stop offset="1" stop-color="#261c1c"/></linearGradient></defs><rect x="0.5" y="0.5" width="199" height="18" fill="url(#gg2)" stroke="#404040"/></svg><svg class="a" style="left:1722px;top:799px" width="14" height="15"><path d="M1 3h12M5 1h4M2.5 4v10h9V4M5.5 6v6M8.5 6v6" stroke="#6a6a6a" stroke-width="1.1" fill="none"/></svg><div class="t" style="left:1531px;top:843px;font-size:12.5px;color:#686868;">不透明度：</div><div class="a" style="left:1592px;top:840px;width:70px;height:20px;background:#505050;border:1px solid #575757"></div><svg class="a" style="left:1645px;top:847px" width="10" height="7"><path d="M1.5 1.5l3.5 3.5 3.5-3.5" stroke="#6a6a6a" stroke-width="1.6" fill="none"/></svg><div class="t" style="left:1553px;top:869px;font-size:12.5px;color:#686868;">位置：</div><div class="a" style="left:1592px;top:866px;width:70px;height:20px;background:#505050;border:1px solid #575757"></div><svg class="a" style="left:1645px;top:873px" width="10" height="7"><path d="M1.5 1.5l3.5 3.5 3.5-3.5" stroke="#6a6a6a" stroke-width="1.6" fill="none"/></svg><div class="a" style="left:1500px;top:890px;width:245px;height:2px;background:#3c3c3c"></div><div class="a" style="left:1500px;top:892px;width:245px;height:30px;background:#444444"></div><div class="a" style="left:1500px;top:892px;width:49px;height:30px;background:#4c4c4c;border-right:1px solid #3e3e3e"></div><svg class="a" style="left:1505px;top:902px" width="7" height="11"><path d="M1 4l2.5-2.5L6 4M1 7l2.5 2.5L6 7" stroke="#c8c8c8" stroke-width="1.1" fill="none"/></svg><div class="t" style="left:1516px;top:901px;font-size:12.5px;color:#e0e0e0;">变换</div><svg class="a" style="left:1729px;top:903px" width="13" height="10"><path d="M1 1.5h11M1 3.5h11M1 5.5h11M1 7.5h11" stroke="#d8d8d8" stroke-width="1"/></svg><div class="a" style="left:1500px;top:922px;width:245px;height:4px;background:#3c3c3c"></div><div class="a" style="left:1500px;top:926px;width:245px;height:27px;background:#444444"></div><div class="a" style="left:1500px;top:926px;width:49px;height:27px;background:#535353;border-right:1px solid #3e3e3e"></div><svg class="a" style="left:1505px;top:934px" width="7" height="11"><path d="M1 4l2.5-2.5L6 4M1 7l2.5 2.5L6 7" stroke="#c8c8c8" stroke-width="1.1" fill="none"/></svg><div class="t" style="left:1516px;top:933px;font-size:12.5px;color:#e8e8e8">字符</div><div class="a" style="left:1549px;top:926px;width:42px;height:27px;background:#4a4a4a;border-right:1px solid #3e3e3e"></div><div class="t" style="left:1557px;top:933px;font-size:12.5px;color:#b4b4b4">段落</div><div class="a" style="left:1591px;top:926px;width:78px;height:27px;background:#4a4a4a;border-right:1px solid #3e3e3e"></div><div class="t" style="left:1599px;top:933px;font-size:12.5px;color:#b4b4b4;letter-spacing:0.4px">OpenType</div><svg class="a" style="left:1729px;top:935px" width="13" height="10"><path d="M1 1.5h11M1 3.5h11M1 5.5h11M1 7.5h11" stroke="#d8d8d8" stroke-width="1"/></svg><div class="a" style="left:1500px;top:953px;width:246px;height:2px;background:#3c3c3c"></div><div class="a" style="left:1745px;top:68px;width:2px;height:887px;background:#3a3a3a"></div><svg class="a" style="left:1486px;top:846px" width="76" height="66">
<ellipse cx="27.5" cy="26" rx="23.5" ry="21" fill="#ededed"/>
<path d="M10 50 L15 37 L25 45 Z" fill="#ededed"/>
<circle cx="19" cy="18.5" r="3.2" fill="#2e2e2e"/><circle cx="37" cy="18.5" r="3.2" fill="#2e2e2e"/>
<ellipse cx="50" cy="40.5" rx="21.5" ry="19" fill="#2e2e2e"/>
<path d="M66 62 L58 50 L52 58 Z" fill="#2e2e2e"/>
<ellipse cx="50" cy="40.5" rx="19.8" ry="17.4" fill="#ededed"/>
<path d="M63.5 59.5 L58 52 L54 57 Z" fill="#ededed"/>
<circle cx="43" cy="34.5" r="3" fill="#2e2e2e"/><circle cx="57.5" cy="34.5" r="3" fill="#2e2e2e"/>
</svg><div class="t" style="left:1565px;top:856px;font-size:42px;line-height:48px;color:#fafafa;-webkit-text-stroke:0.7px #fafafa;text-shadow:0 0 1.5px rgba(0,0,0,0.5)">野鹿志</div>

<!-- PATHFINDER FLOATING -->
<div class="a" style="left:1226px;top:145px;width:236px;height:143px;background:rgba(0,0,0,0.10);border-radius:2px"></div>
<div class="a" style="left:1228px;top:147px;width:232px;height:138px;background:#535353;border:1px solid #3c3c3c"></div>
<div class="a" style="left:1229px;top:148px;width:230px;height:29px;background:#444444"></div>
<div class="a" style="left:1229px;top:148px;width:43px;height:29px;background:#4a4a4a;border-right:1px solid #3e3e3e"></div>
<div class="t" style="left:1238px;top:156px;font-size:12.5px;color:#a8a8a8">对齐</div>
<div class="a" style="left:1272px;top:148px;width:78px;height:30px;background:#535353;border-right:1px solid #3e3e3e"></div>
<div class="t" style="left:1282px;top:156px;font-size:12.5px;color:#ececec">路径查找器</div>
<svg class="a" style="left:1416px;top:160px" width="12" height="8"><path d="M1 1l3.5 3L1 7M6 1l3.5 3L6 7" stroke="#e0e0e0" stroke-width="1.3" fill="none"/></svg>
<div class="a" style="left:1435px;top:157px;width:1px;height:13px;background:#7c7c7c"></div>
<svg class="a" style="left:1442px;top:159px" width="12" height="10"><path d="M1 1.5h10M1 3.5h10M1 5.5h10M1 7.5h10" stroke="#d8d8d8" stroke-width="1"/></svg>
<div class="t" style="left:1234px;top:184px;font-size:12px;color:#c8c8c8">形状模式：</div>
<div class="t" style="left:1234px;top:235px;font-size:12px;color:#c8c8c8">路径查找器：</div>
<svg class="a" style="left:1239px;top:208px" width="16" height="16"><rect x="1" y="0" width="10" height="10" fill="#d0d0d0"/><rect x="5" y="5" width="10" height="10" fill="#d0d0d0"/></svg><svg class="a" style="left:1275px;top:208px" width="16" height="16"><rect x="1" y="0" width="10" height="10" fill="#d0d0d0"/><rect x="5.5" y="5.5" width="9" height="9" fill="#535353" stroke="#d0d0d0" stroke-width="1.3"/></svg><svg class="a" style="left:1311px;top:208px" width="16" height="16"><rect x="1.5" y="0.5" width="9" height="9" fill="none" stroke="#d0d0d0" stroke-width="1.3"/><rect x="5.5" y="5.5" width="9" height="9" fill="none" stroke="#d0d0d0" stroke-width="1.3"/><rect x="5.5" y="5.5" width="5" height="4" fill="#d0d0d0"/></svg><svg class="a" style="left:1348px;top:208px" width="16" height="16"><rect x="1" y="0" width="10" height="10" fill="#d0d0d0"/><rect x="5" y="5" width="10" height="10" fill="#d0d0d0"/><rect x="5" y="5" width="6" height="5" fill="#3a3a3a"/></svg><div class="a" style="left:1380px;top:206px;width:74px;height:20px;background:#565656;border:1px solid #5a5a5a"></div><div class="t" style="left:1405px;top:209px;font-size:12px;color:#707070">扩展</div><svg class="a" style="left:1242px;top:258px" width="16" height="16"><rect x="1.5" y="1.5" width="9" height="9" fill="none" stroke="#d0d0d0" stroke-width="1.6"/><rect x="4.5" y="4.5" width="9" height="9" fill="none" stroke="#d0d0d0" stroke-width="1.6"/><rect x="4.5" y="4.5" width="6" height="6" fill="#d0d0d0"/></svg><svg class="a" style="left:1279px;top:258px" width="16" height="16"><rect x="1" y="1" width="10" height="10" fill="#d0d0d0"/><rect x="4.5" y="4.5" width="10" height="10" fill="#d0d0d0" stroke="#535353" stroke-width="1.2"/></svg><svg class="a" style="left:1316px;top:258px" width="16" height="16"><rect x="1" y="1" width="10" height="10" fill="#d0d0d0"/><rect x="5" y="5" width="10" height="10" fill="#d0d0d0"/><path d="M11 1v4" stroke="#535353"/></svg><svg class="a" style="left:1353px;top:258px" width="16" height="16"><rect x="1.5" y="1.5" width="9" height="9" fill="none" stroke="#d0d0d0" stroke-width="1.1"/><rect x="5.5" y="5.5" width="9" height="9" fill="none" stroke="#d0d0d0" stroke-width="1.3"/><rect x="5.5" y="5.5" width="5" height="5" fill="#d0d0d0"/></svg><div class="a" style="left:1383px;top:252px;width:33px;height:27px;background:#4f5956;border:1.5px solid #d03a50"></div><svg class="a" style="left:1391px;top:258px" width="16" height="16"><rect x="1.5" y="1.5" width="9" height="9" fill="none" stroke="#d0d0d0" stroke-width="1.3"/><rect x="5.5" y="5.5" width="9" height="9" fill="none" stroke="#d0d0d0" stroke-width="1.3"/></svg><svg class="a" style="left:1429px;top:258px" width="16" height="16"><rect x="1.5" y="1.5" width="9" height="9" fill="none" stroke="#d0d0d0" stroke-width="1.3"/><rect x="5" y="5" width="10" height="10" fill="#d0d0d0"/><rect x="2" y="2" width="8" height="8" fill="#535353"/><path d="M10 5v5H5" stroke="#d0d0d0" stroke-width="1.3" fill="none"/></svg><div class="a" style="left:1394px;top:284px;width:37px;height:21px;background:linear-gradient(#fbfbfb,#e4e4ea);border:1px solid #7a7a7a;border-radius:2px;box-shadow:1px 1px 1px rgba(0,0,0,0.15)"></div><div class="t" style="left:1400px;top:287px;font-size:12px;color:#333">轮廓</div><svg class="a" style="left:1340px;top:300px" width="60" height="150"><path d="M11 143 L42 28" stroke="#e0141c" stroke-width="2.2" stroke-linecap="round"/><path d="M44.5 11 L36 24 L40.5 23.5 L39 34 L47 24.5 Z" fill="#e0141c"/></svg>
<!-- PANELS4 -->
<div class="a" style="left:1745px;top:34px;width:1px;height:921px;background:#3a3a3a"></div>
<div class="a" style="left:1746px;top:34px;width:3px;height:921px;background:#505050"></div>
<div class="a" style="left:1749px;top:34px;width:1px;height:921px;background:#2e2e2e"></div>
<div class="a" style="left:1750px;top:0px;width:1px;height:959px;background:#101010"></div>
<div class="a" style="left:0px;top:958px;width:1751px;height:1px;background:#101010"></div>
</body></html>
